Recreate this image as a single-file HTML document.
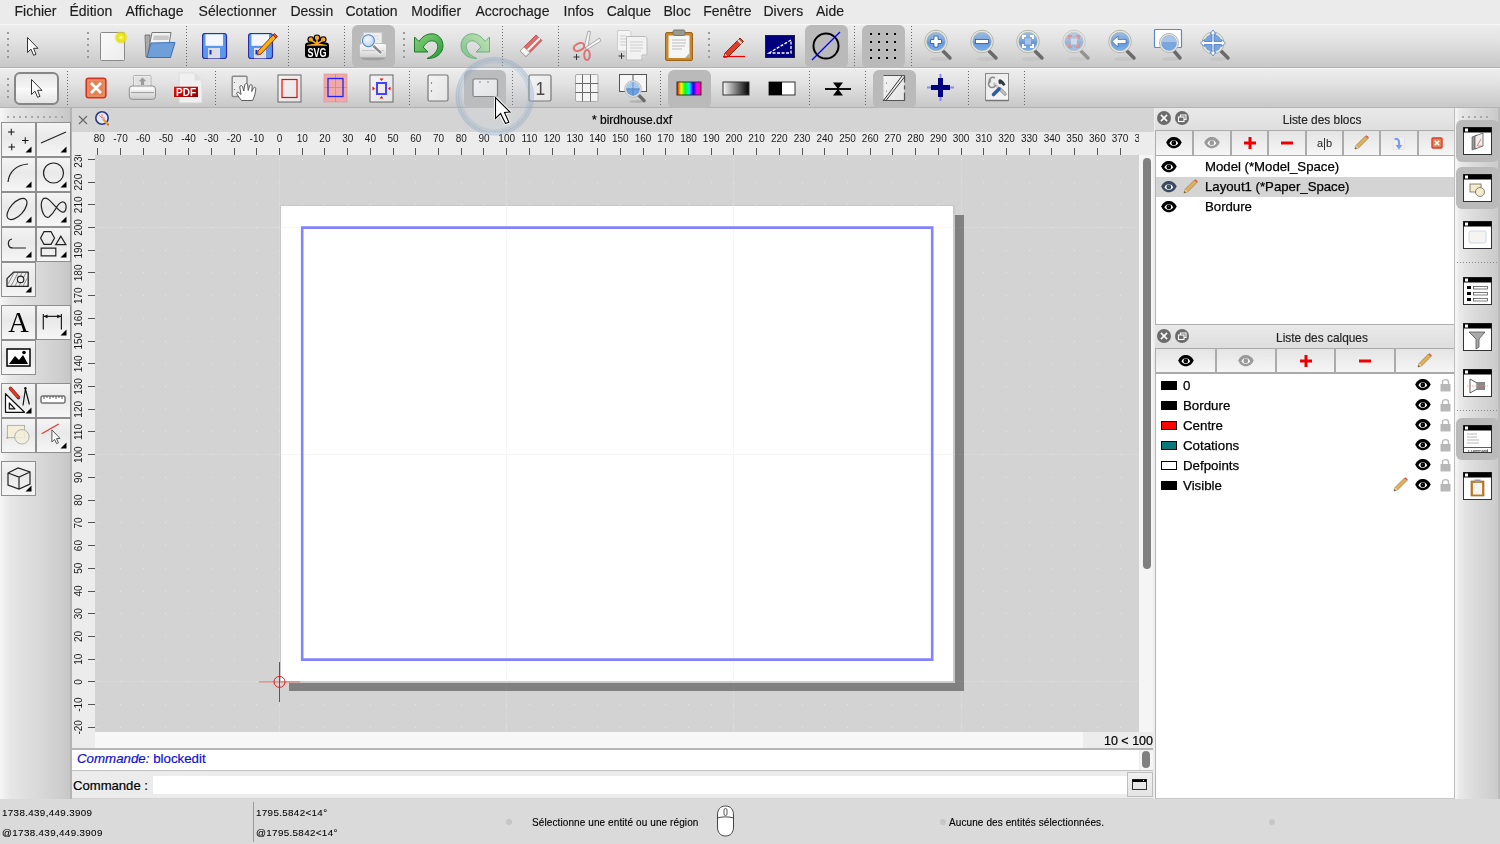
<!DOCTYPE html><html><head><meta charset="utf-8"><title>birdhouse.dxf</title><style>
*{box-sizing:border-box}
html,body{margin:0;padding:0;width:1500px;height:844px;overflow:hidden;background:#ececec;
 font-family:"Liberation Sans",sans-serif;color:#1e1e1e}
.a{position:absolute}
#menubar{left:0;top:0;width:1500px;height:24px;background:#ebebeb}
#menubar span{position:absolute;top:3px;font-size:14px;color:#1c1c1c;white-space:nowrap;-webkit-text-stroke:.15px #1c1c1c}
.tb{left:0;width:1500px;background:linear-gradient(#ededed,#e3e3e3 35%,#c8c8c8)}
#tb1{top:24px;height:44px;border-top:1px solid #f7f7f7;border-bottom:1px solid #b2b2b2}
#tb2{top:68px;height:40px;border-top:1px solid #f7f7f7;border-bottom:1px solid #b2b2b2}
.hl{position:absolute;background:#bababa;border-radius:6px}
.vsep{position:absolute;width:1px;background:repeating-linear-gradient(#6a6a6a 0 1px,transparent 1px 3px)}
.hdl{position:absolute;width:2px;background:repeating-linear-gradient(#9a9a9a 0 2px,transparent 2px 6px)}
#leftdock{left:0;top:108px;width:71px;height:691px;background:linear-gradient(90deg,#f6f6f6 0,#e6e6e6 15%,#dadada 50%,#cecece 85%,#c6c6c6)}
#ldiv{left:70px;top:108px;width:2px;height:691px;background:#b4b4b4}
.tbtn{position:absolute;width:35px;height:35px;border:1px solid #8f8f8f;background:linear-gradient(#f4f4f4,#e9e9e9 45%,#f6f6f6)}
.tbtn .tri{position:absolute;right:3px;bottom:3px;width:0;height:0;border-left:7px solid transparent;border-bottom:7px solid #000}
#tabbar{left:72px;top:108px;width:1082px;height:24px;background:#d4d4d4}
#hruler{left:72px;top:132px;width:1081px;height:23px;background:#ececec;overflow:hidden}
#vruler{left:72px;top:155px;width:23px;height:592px;background:#ececec;overflow:hidden}
#draw{left:95px;top:155px;width:1044px;height:577px;background:#d3d3d3;overflow:hidden}
#vscroll{left:1139px;top:155px;width:14px;height:577px;background:#f5f5f5}
#hscroll{left:95px;top:732px;width:988px;height:16px;background:#f7f7f7}
#zoomlbl{left:1083px;top:732px;width:70px;height:16px;background:#ececec;font-size:12.5px;text-align:right;padding-right:0px;line-height:18.5px;color:#000;-webkit-text-stroke:.2px #000}
#cmdhist{left:72px;top:748px;width:1081px;height:23px;background:#fff;border-top:2px solid #b9b9b9;border-bottom:1px solid #c4c4c4}
#cmdrow{left:72px;top:771px;width:1081px;height:27px;background:#ececec;border-bottom:1px solid #c8c8c8}
#status{left:0;top:799px;width:1500px;height:45px;background:#dadada}
#rdock{left:1155px;top:108px;width:300px;height:690px;background:#ececec}
#rtb{left:1454px;top:108px;width:46px;height:691px;background:linear-gradient(90deg,#f4f4f4 0,#f4f4f4 2px,#eaeaea 4px,#dcdcdc 40%,#cbcbcb 95%,#bcbcbc 96%,#bcbcbc);border-left:1px solid #bdbdbd}
</style></head><body>
<div id="menubar" class="a"><span style="left:14.5px">Fichier</span><span style="left:69.5px">Édition</span><span style="left:125.5px">Affichage</span><span style="left:198.6px">Sélectionner</span><span style="left:290.4px">Dessin</span><span style="left:345.5px">Cotation</span><span style="left:411.3px">Modifier</span><span style="left:475.5px">Accrochage</span><span style="left:563.5px">Infos</span><span style="left:606.7px">Calque</span><span style="left:663.5px">Bloc</span><span style="left:703.2px">Fenêtre</span><span style="left:763.5px">Divers</span><span style="left:816px">Aide</span></div>
<div id="tb1" class="a tb"></div>
<div id="tb2" class="a tb"></div>
<div class="hdl" style="left:7px;top:32px;height:26px"></div>
<svg class="a" style="left:26px;top:36px" width="14" height="22" viewBox="0 0 14 22"><path d="M0.5 0.5 L0.5 15.5 L4 12.2 L6.6 18.3 L9 17.3 L6.5 11.3 L11 11.3 Z" fill="#fff" stroke="#333" stroke-width="1" stroke-linejoin="round" transform="translate(1,1)"/></svg>
<div class="hdl" style="left:87px;top:32px;height:26px"></div>
<svg class="a" style="left:99px;top:30px" width="30" height="32" viewBox="0 0 30 32"><defs><radialGradient id="glow"><stop offset="0" stop-color="#fff"/><stop offset=".25" stop-color="#f3ee30"/><stop offset=".6" stop-color="#e8e010"/><stop offset="1" stop-color="#e8e010" stop-opacity="0"/></radialGradient>
<linearGradient id="pg" x1="0" y1="0" x2="1" y2="1"><stop offset="0" stop-color="#fafafa"/><stop offset="1" stop-color="#ececec"/></linearGradient></defs>
<rect x="1.5" y="2.5" width="24" height="28" rx="1" fill="url(#pg)" stroke="#8a8a8a"/>
<circle cx="22" cy="7.5" r="7" fill="url(#glow)"/></svg>
<svg class="a" style="left:142px;top:31px" width="34" height="28" viewBox="0 0 34 28"><path d="M3 4 L8 4 L8 26 L4 26 Z" fill="#aaa" stroke="#777"/>
<path d="M10 1.5 L29 1.5 L26 20 L6 22 Z" fill="#f2f2f2" stroke="#777"/>
<path d="M12 4.5 L27 4.5 L26.5 9 L11 9 Z" fill="#c8c8c8"/>
<path d="M9 12 L33 11.5 L28.5 26.5 L5 26.5 Z" fill="#6f9fd8" stroke="#3d6fb8"/></svg>
<div class="vsep" style="left:186px;top:26px;height:41px"></div>
<svg class="a" style="left:202px;top:33px" width="26" height="27" viewBox="0 0 26 27"><rect x="0.5" y="0.5" width="24" height="25" rx="2.5" fill="#5a98ee" stroke="#2d2d9e" stroke-width="1.2"/>
<rect x="3.5" y="1.3" width="17.5" height="11.5" fill="#f4f6fc"/>
<rect x="6" y="15" width="12" height="10.3" fill="#dcdce4"/>
<rect x="7.5" y="17" width="2" height="4.5" fill="#1030d0"/></svg>
<svg class="a" style="left:248px;top:30px" width="30" height="30" viewBox="0 0 30 30"><g transform="translate(0,3)"><rect x="0.5" y="0.5" width="24" height="25" rx="2.5" fill="#5a98ee" stroke="#2d2d9e" stroke-width="1.2"/>
<rect x="3.5" y="1.3" width="17.5" height="11.5" fill="#f4f6fc"/>
<rect x="6" y="15" width="12" height="10.3" fill="#dcdce4"/>
<rect x="7.5" y="17" width="2" height="4.5" fill="#1030d0"/></g>
<path d="M10 21 L25 5 L28 8 L13 24 L9.5 25 Z" fill="#f7b500" stroke="#a33010" stroke-width="1"/>
<path d="M25 5 L26.5 3.5 L29.5 6.5 L28 8 Z" fill="#e05030" stroke="#a33010" stroke-width="1"/></svg>
<div class="vsep" style="left:288px;top:26px;height:41px"></div>
<svg class="a" style="left:304px;top:33px" width="26" height="26" viewBox="0 0 26 26"><g stroke="#000" stroke-width="4.2" stroke-linecap="round" fill="none"><path d="M13 11 L13 5 M13 11 L7 6.8 M13 11 L19.2 6.8"/></g>
<circle cx="13" cy="5" r="3.4" fill="#000"/><circle cx="6.8" cy="6.6" r="3.4" fill="#000"/><circle cx="19.2" cy="6.6" r="3.4" fill="#000"/>
<rect x="1" y="9.5" width="24" height="15.5" rx="3.2" fill="#000"/>
<g stroke="#f5a831" stroke-width="1.6" stroke-linecap="round" fill="none"><path d="M13 11 L13 5 M13 11 L7 6.8 M13 11 L19.2 6.8"/></g>
<circle cx="13" cy="4.8" r="2.2" fill="#f5a831"/><circle cx="6.8" cy="6.4" r="2.2" fill="#f5a831"/><circle cx="19.2" cy="6.4" r="2.2" fill="#f5a831"/>
<path d="M3 12 Q13 9.5 23 12 L23 12.8 L3 12.8 Z" fill="#f5a831"/>
<text x="13" y="23.6" text-anchor="middle" font-family="Liberation Sans" font-weight="bold" font-size="12.5" fill="#fff" textLength="19" lengthAdjust="spacingAndGlyphs">SVG</text></svg>
<div class="vsep" style="left:344px;top:26px;height:41px"></div>
<div class="hl" style="left:352px;top:25px;width:43px;height:43px"></div>
<svg class="a" style="left:358px;top:31px" width="30" height="30" viewBox="0 0 30 30"><defs><linearGradient id="pr" x1="0" y1="0" x2="0" y2="1"><stop offset="0" stop-color="#fafafa"/><stop offset=".6" stop-color="#e4e4e4"/><stop offset="1" stop-color="#cfcfcf"/></linearGradient>
<radialGradient id="lens" cx=".4" cy=".35" r=".7"><stop offset="0" stop-color="#f2f6fc"/><stop offset=".6" stop-color="#d4e2f2"/><stop offset="1" stop-color="#b8cce4"/></radialGradient></defs>
<ellipse cx="15" cy="27.5" rx="12" ry="1.8" fill="#888" opacity=".55"/>
<rect x="5.5" y="1.5" width="18.5" height="13" fill="#eeeeee" stroke="#c8c8c8" stroke-width=".8"/>
<path d="M8 5 h13 M8 8 h13" stroke="#d8d8d8" stroke-width="1"/>
<path d="M1.3 15 Q1.3 12.5 4 12.5 L26 12.5 Q28.6 12.5 28.6 15 L28.6 26.5 L1.3 26.5 Z" fill="url(#pr)" stroke="#b0b0b0" stroke-width=".8"/>
<path d="M4 19.5 h22" stroke="#c4c4c4" stroke-width="1"/>
<line x1="15.5" y1="15" x2="22.5" y2="21.5" stroke="#fff" stroke-width="4" stroke-linecap="round"/>
<line x1="15.5" y1="15" x2="22.5" y2="21.5" stroke="#8a8a8a" stroke-width="2.4" stroke-linecap="round"/>
<circle cx="10.4" cy="9.7" r="7.3" fill="#f4f4f4"/>
<circle cx="10.4" cy="9.7" r="6" fill="url(#lens)" stroke="#4a84cc" stroke-width="1.1"/></svg>
<div class="hdl" style="left:403px;top:32px;height:26px"></div>
<svg class="a" style="left:413px;top:33px" width="31" height="27" viewBox="0 0 31 27"><defs><linearGradient id="ugu" x1="0" y1="0" x2="1" y2="1"><stop offset="0" stop-color="#8ad27a"/><stop offset="1" stop-color="#2a9a3a"/></linearGradient></defs>
<path d="M1.5 4 L1.5 19 L15 19 L10.2 14.2 C13 9.8 16 7.8 19 7.8 C22.5 7.8 24.8 10.2 24.8 13.5 C24.8 18 20.5 22.8 14 25.5 C23 25.8 30 20.5 30 12.8 C30 5.8 25 0.8 19 0.8 C13.5 0.8 9 3.8 6 8.5 Z" fill="url(#ugu)" stroke="#1a7a2a" stroke-width="1" stroke-linejoin="round"/></svg>
<svg class="a" style="left:460px;top:33px" width="31" height="27" viewBox="0 0 31 27"><g transform="translate(31,0) scale(-1,1)"><defs><linearGradient id="ugr" x1="0" y1="0" x2="1" y2="1"><stop offset="0" stop-color="#c4e4b4"/><stop offset="1" stop-color="#80c090"/></linearGradient></defs>
<path d="M1.5 4 L1.5 19 L15 19 L10.2 14.2 C13 9.8 16 7.8 19 7.8 C22.5 7.8 24.8 10.2 24.8 13.5 C24.8 18 20.5 22.8 14 25.5 C23 25.8 30 20.5 30 12.8 C30 5.8 25 0.8 19 0.8 C13.5 0.8 9 3.8 6 8.5 Z" fill="url(#ugr)" stroke="#70b080" stroke-width="1" stroke-linejoin="round"/></g></svg>
<div class="vsep" style="left:502px;top:26px;height:41px"></div>
<svg class="a" style="left:517px;top:32px" width="28" height="28" viewBox="0 0 28 28"><ellipse cx="14" cy="24.5" rx="11" ry="1.6" fill="#d0d0d0" opacity=".7"/>
<path d="M3 19 L19 3 L25 8.5 L9 24.5 Z" fill="#e06868" stroke="#b04848" stroke-width="0.8"/>
<path d="M6 21.5 L22 5.5 L23.5 7 L7.5 23 Z" fill="#f4f4f4"/>
<path d="M3 19 L7 15 L13 20.5 L9 24.5 Z" fill="#f6f6f6" stroke="#999" stroke-width="0.8"/></svg>
<div class="vsep" style="left:558px;top:26px;height:41px"></div>
<svg class="a" style="left:572px;top:30px" width="30" height="32" viewBox="0 0 30 32"><path d="M12 18 L16 1 L18.5 1.5 L16 17 Z" fill="#f4f4f4" stroke="#999" stroke-width="0.8"/>
<path d="M13 18 L27.5 8 L29 11 L15 19.5 Z" fill="#f4f4f4" stroke="#999" stroke-width="0.8"/>
<ellipse cx="7" cy="17" rx="5.5" ry="3.5" transform="rotate(-25 7 17)" fill="none" stroke="#e07070" stroke-width="2"/>
<ellipse cx="15" cy="25" rx="2.8" ry="5" fill="none" stroke="#e07070" stroke-width="2"/>
<path d="M1.5 27 h6 M4.5 24 v6" stroke="#333" stroke-width="1"/></svg>
<svg class="a" style="left:617px;top:30px" width="32" height="32" viewBox="0 0 32 32"><path d="M0.5 0.5 h12 l1.5 1.5 v19 h-13.5z" fill="#f4f4f4" stroke="#ccc"/>
<path d="M9.5 6.5 h19 l1.5 1.5 v17 l-5 5 h-15.5 z" fill="#f2f2f2" stroke="#bbb"/>
<path d="M25 30 l0-5 l5 0" fill="#ddd" stroke="#bbb"/>
<path d="M13 12 h13 M13 15 h13 M13 18 h13 M13 21 h11 M3 6 h6 M3 9 h6 M3 12 h6 M3 15 h6" stroke="#ccc" stroke-width="1"/>
<path d="M1.5 26 h6 M4.5 23 v6" stroke="#333" stroke-width="1"/></svg>
<svg class="a" style="left:664px;top:29px" width="30" height="33" viewBox="0 0 30 33"><rect x="1.5" y="3.5" width="27" height="28" rx="1.5" fill="#c8862a" stroke="#9a6418"/>
<rect x="4.5" y="6.5" width="21" height="22.5" fill="#f6f6f6"/>
<path d="M25.5 24 l-4.5 5 h4.5z" fill="#aaa"/>
<rect x="9" y="1" width="12" height="5.5" rx="1.5" fill="#9a9a8a" stroke="#777"/>
<path d="M8 11 h14 M8 14 h14 M8 17 h13 M8 20 h10" stroke="#bbb" stroke-width="1"/></svg>
<div class="hdl" style="left:708px;top:32px;height:26px"></div>
<svg class="a" style="left:722px;top:34px" width="24" height="24" viewBox="0 0 24 24"><path d="M3 19 L18 4 L21.5 7.5 L6.5 22.5 L2 23.5 Z" fill="#e23b2a" stroke="#7a3010" stroke-width="1"/>
<path d="M16 6 L19.5 9.5" stroke="#ddd" stroke-width="2"/>
<path d="M2 23.5 L3 19 L6.5 22.5 Z" fill="#f0c090" stroke="#7a3010" stroke-width="0.6"/>
<line x1="1" y1="22.5" x2="23" y2="22.5" stroke="#e00" stroke-width="1.2"/></svg>
<svg class="a" style="left:765px;top:35px" width="30" height="23" viewBox="0 0 30 23"><rect x="0.5" y="0.5" width="29" height="22" fill="#00007f" stroke="#222"/>
<path d="M4 18 L26 5 L26 18 Z" fill="none" stroke="#fff" stroke-width="1.3" stroke-dasharray="3 1.5"/></svg>
<div class="hl" style="left:805px;top:25px;width:43px;height:43px"></div>
<svg class="a" style="left:805px;top:25px" width="43" height="43" viewBox="0 0 43 43"><circle cx="21" cy="21" r="12.5" fill="none" stroke="#000" stroke-width="2"/>
<line x1="7" y1="35" x2="35" y2="7" stroke="#00f" stroke-width="1.2"/></svg>
<div class="vsep" style="left:854px;top:26px;height:41px"></div>
<div class="hl" style="left:862px;top:25px;width:43px;height:43px"></div>
<svg class="a" style="left:862px;top:25px" width="43" height="43" viewBox="0 0 43 43"><rect x="8" y="8" width="2" height="2" fill="#000"/><rect x="8" y="16" width="2" height="2" fill="#000"/><rect x="8" y="24" width="2" height="2" fill="#000"/><rect x="8" y="32" width="2" height="2" fill="#000"/><rect x="16" y="8" width="2" height="2" fill="#000"/><rect x="16" y="16" width="2" height="2" fill="#000"/><rect x="16" y="24" width="2" height="2" fill="#000"/><rect x="16" y="32" width="2" height="2" fill="#000"/><rect x="24" y="8" width="2" height="2" fill="#000"/><rect x="24" y="16" width="2" height="2" fill="#000"/><rect x="24" y="24" width="2" height="2" fill="#000"/><rect x="24" y="32" width="2" height="2" fill="#000"/><rect x="32" y="8" width="2" height="2" fill="#000"/><rect x="32" y="16" width="2" height="2" fill="#000"/><rect x="32" y="24" width="2" height="2" fill="#000"/><rect x="32" y="32" width="2" height="2" fill="#000"/></svg>
<div class="vsep" style="left:911px;top:26px;height:41px"></div>
<svg class="a" style="left:923px;top:28px" width="32" height="34" viewBox="0 0 32 34"><g opacity="1"><defs><linearGradient id="zb936" x1="0" y1="0" x2="0" y2="1"><stop offset="0" stop-color="#9dbbe4"/><stop offset=".45" stop-color="#7aa6dd"/><stop offset=".55" stop-color="#6698d8"/><stop offset="1" stop-color="#79b0ec"/></linearGradient></defs>
<ellipse cx="17" cy="31" rx="10" ry="2" fill="#bbb" opacity=".5"/>
<line x1="20" y1="23" x2="27" y2="30" stroke="#6a6a6a" stroke-width="3.5" stroke-linecap="round"/>
<circle cx="13" cy="13.5" r="11.3" fill="#e9e9e0" stroke="#b5b5ad" stroke-width="1"/>
<circle cx="13" cy="13.5" r="9.3" fill="url(#zb936)" stroke="#9aa" stroke-width=".5"/><path d="M11 8 h4 v3.5 h3.5 v4 h-3.5 v3.5 h-4 v-3.5 h-3.5 v-4 h3.5z" fill="#fff" stroke="#2a58a0" stroke-width=".8"/></g></svg>
<svg class="a" style="left:969px;top:28px" width="32" height="34" viewBox="0 0 32 34"><g opacity="1"><defs><linearGradient id="zb982" x1="0" y1="0" x2="0" y2="1"><stop offset="0" stop-color="#9dbbe4"/><stop offset=".45" stop-color="#7aa6dd"/><stop offset=".55" stop-color="#6698d8"/><stop offset="1" stop-color="#79b0ec"/></linearGradient></defs>
<ellipse cx="17" cy="31" rx="10" ry="2" fill="#bbb" opacity=".5"/>
<line x1="20" y1="23" x2="27" y2="30" stroke="#6a6a6a" stroke-width="3.5" stroke-linecap="round"/>
<circle cx="13" cy="13.5" r="11.3" fill="#e9e9e0" stroke="#b5b5ad" stroke-width="1"/>
<circle cx="13" cy="13.5" r="9.3" fill="url(#zb982)" stroke="#9aa" stroke-width=".5"/><rect x="6.5" y="11.5" width="13" height="4" fill="#fff" stroke="#2a58a0" stroke-width=".8"/></g></svg>
<svg class="a" style="left:1015px;top:28px" width="32" height="34" viewBox="0 0 32 34"><g opacity="1"><defs><linearGradient id="zb1028" x1="0" y1="0" x2="0" y2="1"><stop offset="0" stop-color="#9dbbe4"/><stop offset=".45" stop-color="#7aa6dd"/><stop offset=".55" stop-color="#6698d8"/><stop offset="1" stop-color="#79b0ec"/></linearGradient></defs>
<ellipse cx="17" cy="31" rx="10" ry="2" fill="#bbb" opacity=".5"/>
<line x1="20" y1="23" x2="27" y2="30" stroke="#6a6a6a" stroke-width="3.5" stroke-linecap="round"/>
<circle cx="13" cy="13.5" r="11.3" fill="#e9e9e0" stroke="#b5b5ad" stroke-width="1"/>
<circle cx="13" cy="13.5" r="9.3" fill="url(#zb1028)" stroke="#9aa" stroke-width=".5"/><path d="M8 11 v-3 h3 M15 8 h3 v3 M18 16 v3 h-3 M11 19 h-3 v-3" fill="none" stroke="#fff" stroke-width="2"/><rect x="10" y="10.5" width="6" height="6" fill="#a8c4ea"/></g></svg>
<svg class="a" style="left:1061px;top:28px" width="32" height="34" viewBox="0 0 32 34"><g opacity=".6"><defs><linearGradient id="zb1074" x1="0" y1="0" x2="0" y2="1"><stop offset="0" stop-color="#9dbbe4"/><stop offset=".45" stop-color="#7aa6dd"/><stop offset=".55" stop-color="#6698d8"/><stop offset="1" stop-color="#79b0ec"/></linearGradient></defs>
<ellipse cx="17" cy="31" rx="10" ry="2" fill="#bbb" opacity=".5"/>
<line x1="20" y1="23" x2="27" y2="30" stroke="#6a6a6a" stroke-width="3.5" stroke-linecap="round"/>
<circle cx="13" cy="13.5" r="11.3" fill="#e9e9e0" stroke="#b5b5ad" stroke-width="1"/>
<circle cx="13" cy="13.5" r="9.3" fill="url(#zb1074)" stroke="#9aa" stroke-width=".5"/><path d="M8 11 v-3 h3 M15 8 h3 v3 M18 16 v3 h-3 M11 19 h-3 v-3" fill="none" stroke="#e06060" stroke-width="2"/><rect x="10" y="10.5" width="6" height="6" fill="#c8d4e4"/></g></svg>
<svg class="a" style="left:1107px;top:28px" width="32" height="34" viewBox="0 0 32 34"><g opacity="1"><defs><linearGradient id="zb1120" x1="0" y1="0" x2="0" y2="1"><stop offset="0" stop-color="#9dbbe4"/><stop offset=".45" stop-color="#7aa6dd"/><stop offset=".55" stop-color="#6698d8"/><stop offset="1" stop-color="#79b0ec"/></linearGradient></defs>
<ellipse cx="17" cy="31" rx="10" ry="2" fill="#bbb" opacity=".5"/>
<line x1="20" y1="23" x2="27" y2="30" stroke="#6a6a6a" stroke-width="3.5" stroke-linecap="round"/>
<circle cx="13" cy="13.5" r="11.3" fill="#e9e9e0" stroke="#b5b5ad" stroke-width="1"/>
<circle cx="13" cy="13.5" r="9.3" fill="url(#zb1120)" stroke="#9aa" stroke-width=".5"/><path d="M5 13.5 L11 8 v3.5 h8 v4 h-8 v3.5 z" fill="#fff" stroke="#2a58a0" stroke-width=".6"/></g></svg>
<svg class="a" style="left:1152px;top:28px" width="34" height="34" viewBox="0 0 34 34"><rect x="2.5" y="1.5" width="27" height="18" rx="1" fill="#fff" stroke="#5b88c8" stroke-width="1.2"/>
<ellipse cx="19" cy="31" rx="9" ry="2" fill="#bbb" opacity=".5"/>
<line x1="22" y1="23" x2="28" y2="30" stroke="#6a6a6a" stroke-width="3.5" stroke-linecap="round"/>
<circle cx="17" cy="15" r="9.5" fill="#e9e9e0" stroke="#b5b5ad"/>
<circle cx="17" cy="15" r="7.8" fill="#7aa6dd"/><path d="M9.3 14 A7.8 7.8 0 0 1 24.7 14 Z" fill="#a8c4ea"/></svg>
<svg class="a" style="left:1199px;top:28px" width="34" height="34" viewBox="0 0 34 34"><ellipse cx="19" cy="31" rx="9" ry="2" fill="#bbb" opacity=".5"/>
<line x1="22" y1="23" x2="29" y2="30" stroke="#6a6a6a" stroke-width="3.5" stroke-linecap="round"/>
<circle cx="14" cy="15" r="11" fill="#e9e9e0" stroke="#b5b5ad"/>
<circle cx="14" cy="15" r="9" fill="#79a5dc"/>
<path d="M14 2 l3 4 h-2 v7.5 h7.5 v-2 l4 3.5 l-4 3.5 v-2 h-7.5 v7.5 h2 l-3 4 l-3-4 h2 v-7.5 h-7.5 v2 l-4-3.5 l4-3.5 v2 h7.5 v-7.5 h-2 z" fill="#fff" stroke="#4a7cc4" stroke-width=".8"/></svg>
<div class="hdl" style="left:7px;top:78px;height:20px"></div>
<div class="a" style="left:14px;top:72px;width:45px;height:33px;border:2px solid #868686;border-radius:6px;background:linear-gradient(#e8e8e8,#f4f4f4 45%,#fbfbfb 50%,#e4e4e4)"></div>
<svg class="a" style="left:30px;top:78px" width="14" height="22" viewBox="0 0 14 22"><path d="M0.5 0.5 L0.5 15.5 L4 12.2 L6.6 18.3 L9 17.3 L6.5 11.3 L11 11.3 Z" fill="#fff" stroke="#333" stroke-width="1" stroke-linejoin="round" transform="translate(1,1)"/></svg>
<div class="vsep" style="left:67px;top:71px;height:35px"></div>
<svg class="a" style="left:85px;top:77px" width="22" height="22" viewBox="0 0 22 22"><rect x="1.2" y="1.2" width="19.6" height="19.6" rx="2.5" fill="#e2845a" stroke="#dc3020" stroke-width="1.6"/>
<rect x="3" y="3" width="16" height="16" fill="none" stroke="#ea9a70" stroke-width=".8"/>
<path d="M6 6 L16 16 M16 6 L6 16" stroke="#fff" stroke-width="2.6"/></svg>
<svg class="a" style="left:128px;top:74px" width="30" height="28" viewBox="0 0 30 28"><defs><linearGradient id="pp" x1="0" y1="0" x2="0" y2="1"><stop offset="0" stop-color="#fafafa"/><stop offset=".5" stop-color="#e6e6e6"/><stop offset="1" stop-color="#c8c8c8"/></linearGradient></defs>
<rect x="5.5" y="1.5" width="17.5" height="11.5" rx="1" fill="#ececec" stroke="#b4b4b4"/>
<rect x="7" y="3" width="14.5" height="8" fill="#e2e2e2"/>
<path d="M14.5 3.5 l-3.8 3.8 h2.2 v3.7 h3.2 v-3.7 h2.2z" fill="#9c9c9c"/>
<rect x="1.3" y="12" width="26.2" height="13.4" rx="3" fill="url(#pp)" stroke="#8e8e8e" stroke-width="1"/>
<path d="M3 18.6 h23" stroke="#9a9a9a" stroke-width="1"/><path d="M3.5 15 h22" stroke="#fff" stroke-width="1"/></svg>
<svg class="a" style="left:173px;top:72px" width="30" height="32" viewBox="0 0 30 32"><defs><linearGradient id="pdfl" x1="0" y1="0" x2="1" y2="1"><stop offset="0" stop-color="#f01010"/><stop offset="1" stop-color="#8a0000"/></linearGradient></defs>
<path d="M6.2 1 h15.5 l7.1 7.5 v22.3 h-22.6 z" fill="#f0f0f0" stroke="#dcdcdc" stroke-width=".8"/>
<path d="M21.7 1 v7.5 h7.1" fill="#e0e0e0"/>
<rect x="1" y="14.7" width="24" height="10.3" fill="url(#pdfl)"/>
<text x="13" y="23.8" text-anchor="middle" font-family="Liberation Sans" font-weight="bold" font-size="11" fill="#fff" textLength="20" lengthAdjust="spacingAndGlyphs">PDF</text></svg>
<div class="vsep" style="left:215px;top:71px;height:35px"></div>
<svg class="a" style="left:230px;top:73px" width="28" height="30" viewBox="0 0 28 30"><rect x="2.2" y="3.2" width="14.8" height="20.3" rx="1" fill="#ececec" stroke="#8a8a8a" stroke-width="1.5"/>
<circle cx="4.5" cy="9.5" r=".6" fill="#666"/><circle cx="4.5" cy="16.5" r=".6" fill="#666"/>
<path d="M11.5 27.5 C9.5 25 8 23 6.8 21 C6.2 19.8 7.5 18.6 8.8 19.5 L11 21.5 L9.8 14 C9.6 12.5 12 12 12.5 13.6 L13.8 18 L14.8 11.8 C15 10.2 17.5 10.2 17.7 11.8 L18.2 17.5 L19.6 12.6 C20 11.2 22.2 11.4 22.2 13 L21.8 18.5 L23.4 15 C24 13.8 26 14.2 25.8 15.8 C25.5 19.5 24.5 24 22.5 27.5 Z" fill="#fff" stroke="#5a5a5a" stroke-width="1" stroke-linejoin="round"/></svg>
<svg class="a" style="left:277px;top:74px" width="26" height="29" viewBox="0 0 26 29"><defs><linearGradient id="pgb" x1="0" y1="0" x2="1" y2="1"><stop offset="0" stop-color="#f4f4f4"/><stop offset="1" stop-color="#e4e4e4"/></linearGradient></defs><rect x="1" y="1" width="23" height="27" fill="url(#pgb)" stroke="#666"/>
<rect x="5" y="5.5" width="15" height="18" fill="none" stroke="#f00" stroke-width="1.2"/></svg>
<svg class="a" style="left:323px;top:73px" width="26" height="30" viewBox="0 0 26 30"><rect x="1" y="1" width="23" height="28" fill="#f0a8a8" stroke="#d89090" stroke-width=".6"/>
<path d="M12.5 1 v28 M1 14.5 h23" stroke="#d08888" stroke-width=".8"/>
<rect x="5" y="5.5" width="15" height="18" fill="none" stroke="#22e" stroke-width="1.3"/></svg>
<svg class="a" style="left:369px;top:74px" width="26" height="29" viewBox="0 0 26 29"><defs><linearGradient id="pgb" x1="0" y1="0" x2="1" y2="1"><stop offset="0" stop-color="#f4f4f4"/><stop offset="1" stop-color="#e4e4e4"/></linearGradient></defs><rect x="1" y="1" width="23" height="27" fill="url(#pgb)" stroke="#666"/>
<rect x="8" y="9" width="9" height="11" fill="none" stroke="#44f" stroke-width="2"/>
<path d="M12.5 7 l-2-2.5 h4z M12.5 22 l-2 2.5 h4z M6 14.5 l-2.5-2 v4z M19 14.5 l2.5-2 v4z" fill="#f00"/></svg>
<div class="vsep" style="left:409px;top:71px;height:35px"></div>
<svg class="a" style="left:427px;top:74px" width="22" height="28" viewBox="0 0 22 28"><defs><linearGradient id="pgb" x1="0" y1="0" x2="1" y2="1"><stop offset="0" stop-color="#f4f4f4"/><stop offset="1" stop-color="#e4e4e4"/></linearGradient></defs><rect x="1" y="1" width="20" height="26" rx="1.5" fill="url(#pgb)" stroke="#777" stroke-width="1.2"/>
<circle cx="4.5" cy="9" r=".7" fill="#555"/><circle cx="4.5" cy="17" r=".7" fill="#555"/></svg>
<div class="hl" style="left:464px;top:70px;width:42px;height:38px"></div>
<svg class="a" style="left:472px;top:78px" width="27" height="20" viewBox="0 0 27 20"><defs><linearGradient id="pgb" x1="0" y1="0" x2="1" y2="1"><stop offset="0" stop-color="#f4f4f4"/><stop offset="1" stop-color="#e4e4e4"/></linearGradient></defs><rect x="1" y="1" width="24.5" height="17.5" rx="1.5" fill="url(#pgb)" stroke="#777" stroke-width="1.2"/>
<circle cx="8" cy="4" r=".7" fill="#555"/><circle cx="16" cy="4" r=".7" fill="#555"/></svg>
<div class="vsep" style="left:512px;top:71px;height:35px"></div>
<svg class="a" style="left:528px;top:74px" width="24" height="28" viewBox="0 0 24 28"><defs><linearGradient id="pgb" x1="0" y1="0" x2="1" y2="1"><stop offset="0" stop-color="#f4f4f4"/><stop offset="1" stop-color="#e4e4e4"/></linearGradient></defs><rect x="1" y="1" width="22" height="26" rx="1.5" fill="url(#pgb)" stroke="#777" stroke-width="1.2"/>
<text x="12.3" y="21.3" text-anchor="middle" font-family="Liberation Sans" font-size="17.5" fill="#484848">1</text></svg>
<svg class="a" style="left:574px;top:73px" width="25" height="30" viewBox="0 0 25 30"><rect x="1.5" y="1.5" width="22.5" height="27" rx="1.5" fill="#f4f4f4" stroke="#aaa"/>
<path d="M8.5 1.5 v27 M16.5 1.5 v27 M1.5 10.5 h22.5 M1.5 19.5 h22.5" stroke="#6a6a6a" stroke-width="1"/></svg>
<svg class="a" style="left:618px;top:73px" width="32" height="31" viewBox="0 0 32 31"><rect x="1.5" y="1.5" width="27" height="17" fill="#f6f6f6" stroke="#555"/>
<path d="M15 1.5 v17" stroke="#555"/>
<ellipse cx="20" cy="28.5" rx="9" ry="1.5" fill="#999" opacity=".5"/>
<line x1="19.5" y1="21" x2="26" y2="27.5" stroke="#6a6a6a" stroke-width="3.2" stroke-linecap="round"/>
<circle cx="15" cy="16" r="8.3" fill="#e8e8e0" stroke="#bbb"/>
<circle cx="15" cy="16" r="6.8" fill="#6ea0dc"/><path d="M8.2 15.5 A6.8 6.8 0 0 1 21.8 15.5 Z" fill="#a8c8ee"/><path d="M15 9.2 v13.6 M8.2 16 h13.6" stroke="#4a7cc4" stroke-width=".7"/></svg>
<div class="vsep" style="left:660px;top:71px;height:35px"></div>
<div class="hl" style="left:668px;top:70px;width:43px;height:38px"></div>
<svg class="a" style="left:676px;top:81px" width="26" height="15" viewBox="0 0 26 15"><defs><linearGradient id="rb"><stop offset="0" stop-color="#e00"/><stop offset=".17" stop-color="#ff0"/><stop offset=".33" stop-color="#0f0"/><stop offset=".5" stop-color="#0ff"/><stop offset=".67" stop-color="#00f"/><stop offset=".83" stop-color="#f0f"/><stop offset="1" stop-color="#f06"/></linearGradient></defs>
<rect x="1" y="1" width="24" height="13" fill="url(#rb)" stroke="#333"/></svg>
<svg class="a" style="left:722px;top:81px" width="28" height="15" viewBox="0 0 28 15"><defs><linearGradient id="gr"><stop offset="0" stop-color="#f8f8f8"/><stop offset="1" stop-color="#000"/></linearGradient></defs>
<rect x="1" y="1" width="26" height="13" fill="url(#gr)" stroke="#333"/></svg>
<svg class="a" style="left:768px;top:81px" width="28" height="15" viewBox="0 0 28 15"><rect x="1" y="1" width="26" height="13" fill="#fff" stroke="#333"/><rect x="1" y="1" width="13" height="13" fill="#000"/></svg>
<div class="vsep" style="left:809px;top:71px;height:35px"></div>
<svg class="a" style="left:824px;top:81px" width="28" height="16" viewBox="0 0 28 16"><line x1="1" y1="8" x2="27" y2="8" stroke="#111" stroke-width="2"/>
<path d="M9 1.5 h10 l-5 6.5z M9 14.5 h10 l-5 -6.5z" fill="#000"/></svg>
<div class="vsep" style="left:865px;top:71px;height:35px"></div>
<div class="hl" style="left:873px;top:70px;width:43px;height:38px"></div>
<svg class="a" style="left:882px;top:74px" width="24" height="28" viewBox="0 0 24 28"><defs><linearGradient id="pgb" x1="0" y1="0" x2="1" y2="1"><stop offset="0" stop-color="#f4f4f4"/><stop offset="1" stop-color="#e4e4e4"/></linearGradient></defs><path d="M1.5 1.5 h21 v25 h-21z" fill="url(#pgb)" stroke="#555" stroke-width="1.2" stroke-dasharray="28 3 4 3 30 60"/>
<path d="M1.5 26.5 L20 2 M4 26.5 L22.5 3" stroke="#333" stroke-width="1"/>
<circle cx="4.5" cy="9" r=".6" fill="#555"/><circle cx="4.5" cy="17" r=".6" fill="#555"/></svg>
<svg class="a" style="left:926px;top:73px" width="29" height="29" viewBox="0 0 29 29"><path d="M14.5 1 v27 M1 14.5 h27" stroke="#8a8aee" stroke-width="2"/>
<path d="M14.5 5 v19 M5 14.5 h19" stroke="#000080" stroke-width="5"/></svg>
<div class="vsep" style="left:968px;top:71px;height:35px"></div>
<svg class="a" style="left:984px;top:72px" width="26" height="30" viewBox="0 0 26 30"><defs><linearGradient id="tpg" x1="0" y1="0" x2="1" y2="1"><stop offset="0" stop-color="#e8e8e8"/><stop offset="1" stop-color="#f8f8f8"/></linearGradient></defs>
<rect x="1.5" y="1.5" width="23" height="27" fill="url(#tpg)" stroke="#8a8a8a" stroke-width="1"/>
<path d="M2 28.5 h22.5" stroke="#777" stroke-width="1.5"/>
<path d="M15.5 16.5 L21 22" stroke="#9a9a9a" stroke-width="3.4" stroke-linecap="round"/>
<path d="M15.5 16.5 L21 22" stroke="#c8c8c8" stroke-width="1.6" stroke-linecap="round"/>
<path d="M9.5 11 L14 15.5" stroke="#c8c8c8" stroke-width="2.6"/>
<path d="M7 8.5 a3.6 3.6 0 1 0 4.5 4.5" fill="none" stroke="#8a8a8a" stroke-width="1.6"/>
<path d="M6 11 a3.6 3.6 0 0 1 5 -5" fill="none" stroke="#8a8a8a" stroke-width="1.6"/>
<path d="M9.5 22.5 L15 17" stroke="#2a5ea8" stroke-width="3.6" stroke-linecap="round"/>
<path d="M14.5 8 C16 6.5 18 7.5 20.5 11 L21.5 12.5 L19.5 14 L17 11.5 L16 12.5 L14.5 11 Z" fill="#303a40"/></svg>
<div class="vsep" style="left:1024px;top:71px;height:35px"></div>
<div id="leftdock" class="a"></div><div id="ldiv" class="a"></div>
<div class="a" style="left:7px;top:116px;width:56px;height:2px;background:repeating-linear-gradient(90deg,#a8a8a8 0 2px,transparent 2px 6px)"></div>
<div class="tbtn" style="left:1px;top:122px"></div>
<svg class="a" style="left:1px;top:122px" width="35" height="35" viewBox="0 0 35 35"><path d="M7 10h6.5M10.25 6.75v6.5 M21 18.5h6.5M24.25 15.25v6.5 M7.5 25h6.5M10.75 21.75v6.5" stroke="#111" stroke-width="1"/><path d="M24.5 30.5 L30.5 24.5 L30.5 30.5 Z" fill="#000"/></svg>
<div class="tbtn" style="left:36px;top:122px"></div>
<svg class="a" style="left:36px;top:122px" width="35" height="35" viewBox="0 0 35 35"><path d="M5 21 L30 10" fill="none" stroke="#222" stroke-width="1.2"/><path d="M24.5 30.5 L30.5 24.5 L30.5 30.5 Z" fill="#000"/></svg>
<div class="tbtn" style="left:1px;top:157px"></div>
<svg class="a" style="left:1px;top:157px" width="35" height="35" viewBox="0 0 35 35"><path d="M7 25 C8 15 15 8 27 7" fill="none" stroke="#222" stroke-width="1.2"/><path d="M24.5 30.5 L30.5 24.5 L30.5 30.5 Z" fill="#000"/></svg>
<div class="tbtn" style="left:36px;top:157px"></div>
<svg class="a" style="left:36px;top:157px" width="35" height="35" viewBox="0 0 35 35"><circle cx="17.5" cy="16" r="10" fill="none" stroke="#222" stroke-width="1.2"/><path d="M24.5 30.5 L30.5 24.5 L30.5 30.5 Z" fill="#000"/></svg>
<div class="tbtn" style="left:1px;top:192px"></div>
<svg class="a" style="left:1px;top:192px" width="35" height="35" viewBox="0 0 35 35"><ellipse cx="16" cy="17" rx="13" ry="6.5" transform="rotate(-48 16 17)" fill="none" stroke="#222" stroke-width="1.2"/><path d="M24.5 30.5 L30.5 24.5 L30.5 30.5 Z" fill="#000"/></svg>
<div class="tbtn" style="left:36px;top:192px"></div>
<svg class="a" style="left:36px;top:192px" width="35" height="35" viewBox="0 0 35 35"><path d="M7 7 C3 12 7 28 13 25 C20 20 20 12 26 10 C32 9 31 22 26 20 C20 18 12 2 7 7 Z" fill="none" stroke="#222" stroke-width="1.2"/><path d="M24.5 30.5 L30.5 24.5 L30.5 30.5 Z" fill="#000"/></svg>
<div class="tbtn" style="left:1px;top:227px"></div>
<svg class="a" style="left:1px;top:227px" width="35" height="35" viewBox="0 0 35 35"><path d="M11 12 C6 13 6 21 12 21 L25 21" fill="none" stroke="#222" stroke-width="1.2"/><path d="M24.5 30.5 L30.5 24.5 L30.5 30.5 Z" fill="#000"/></svg>
<div class="tbtn" style="left:36px;top:227px"></div>
<svg class="a" style="left:36px;top:227px" width="35" height="35" viewBox="0 0 35 35"><path d="M4.6 11 L8 4.7 H15 L18.5 11 L15 17.4 H8 Z M19.8 17.6 L24.8 9.1 L29.9 17.6 Z M5.2 21.2 H19.8 V28.8 H5.2 Z" fill="none" stroke="#222" stroke-width="1.2"/><path d="M24.5 30.5 L30.5 24.5 L30.5 30.5 Z" fill="#000"/></svg>
<div class="tbtn" style="left:1px;top:262px"></div>
<svg class="a" style="left:1px;top:262px" width="35" height="35" viewBox="0 0 35 35"><path d="M12.6 10.1 H27.2 V24.4 H6 V16.6 Z" fill="#eee" stroke="#222" stroke-width="1.3" stroke-linejoin="round"/>
<path d="M7 22 L13 11 M10 24 L17 11 M14 24 L21 11 M18 24 L25 11 M22 24 L27 15 M26 24 L27 22" stroke="#666" stroke-width=".7"/>
<circle cx="19.6" cy="17.4" r="3.2" fill="#eee" stroke="#222" stroke-width="1.2"/><path d="M24.5 30.5 L30.5 24.5 L30.5 30.5 Z" fill="#000"/></svg>
<div class="tbtn" style="left:1px;top:305px"></div>
<svg class="a" style="left:1px;top:305px" width="35" height="35" viewBox="0 0 35 35"><text x="17.5" y="27" text-anchor="middle" font-family="Liberation Serif" font-size="28.5" fill="#000">A</text></svg>
<div class="tbtn" style="left:36px;top:305px"></div>
<svg class="a" style="left:36px;top:305px" width="35" height="35" viewBox="0 0 35 35"><path d="M7.3 9 V24.5 M25.4 9 V24.5 M7.3 11.4 H25.4" stroke="#222" stroke-width="1.2" fill="none"/><path d="M7.5 11.4 l4-1.8v3.6z M25.2 11.4 l-4-1.8v3.6z" fill="#111"/><path d="M24.5 30.5 L30.5 24.5 L30.5 30.5 Z" fill="#000"/></svg>
<div class="tbtn" style="left:1px;top:340px"></div>
<svg class="a" style="left:1px;top:340px" width="35" height="35" viewBox="0 0 35 35"><rect x="6" y="9" width="23" height="17" fill="#fff" stroke="#000" stroke-width="1.5"/><path d="M8 24 L14 16 L18 20 L22 15 L27 24 Z" fill="#000"/><circle cx="23" cy="12.5" r="1.8" fill="#000"/></svg>
<div class="tbtn" style="left:1px;top:383px"></div>
<svg class="a" style="left:1px;top:383px" width="35" height="35" viewBox="0 0 35 35"><path d="M4.5 10.7 V29.3 H23.5 Z M8.3 20 V25.8 H14 Z" fill="#fff" stroke="#111" stroke-width="1.2" fill-rule="evenodd" stroke-linejoin="round"/>
<path d="M9.5 5.5 L17.5 14.5" stroke="#7a2a10" stroke-width="3.6" stroke-linecap="round"/><path d="M9.5 5.5 L17.5 14.5" stroke="#e23b2a" stroke-width="2.4" stroke-linecap="round"/><path d="M17 14 l2 2.2 l-2.8-.6z" fill="#333"/>
<path d="M24.4 6 L22 22.5 M24.4 6 L28.4 21.5" stroke="#111" stroke-width="1.2" fill="none"/><circle cx="24.4" cy="5.2" r="1.2" fill="#111"/><path d="M24.5 30.5 L30.5 24.5 L30.5 30.5 Z" fill="#000"/></svg>
<div class="tbtn" style="left:36px;top:383px"></div>
<svg class="a" style="left:36px;top:383px" width="35" height="35" viewBox="0 0 35 35"><rect x="5" y="13" width="24" height="7" rx="1" fill="#fff" stroke="#333"/><path d="M8 13v3 M11 13v2 M14 13v3 M17 13v2 M20 13v3 M23 13v2 M26 13v3" stroke="#333" stroke-width=".8"/></svg>
<div class="tbtn" style="left:1px;top:418px"></div>
<svg class="a" style="left:1px;top:418px" width="35" height="35" viewBox="0 0 35 35"><rect x="6.4" y="7.4" width="17.1" height="12.3" fill="#f2eed8" stroke="#aaa" stroke-width=".9"/>
<circle cx="20.9" cy="18.8" r="7.2" fill="#f2eed8" fill-opacity=".85" stroke="#aaa" stroke-width=".9"/><circle cx="6.4" cy="19.7" r="1" fill="#f08080"/></svg>
<div class="tbtn" style="left:36px;top:418px"></div>
<svg class="a" style="left:36px;top:418px" width="35" height="35" viewBox="0 0 35 35"><path d="M5.7 15.8 L22.7 6" stroke="#e33" stroke-width="1.3"/>
<path d="M15.9 11.9 V24 L18.6 21.4 L20.6 25.6 L22.4 24.8 L20.5 20.6 L24 20.4 Z" fill="#fff" stroke="#555" stroke-width="1" stroke-linejoin="round"/><path d="M24.5 30.5 L30.5 24.5 L30.5 30.5 Z" fill="#000"/></svg>
<div class="tbtn" style="left:1px;top:461px"></div>
<svg class="a" style="left:1px;top:461px" width="35" height="35" viewBox="0 0 35 35"><path d="M7 12 L17 7 L29 11 V23 L18 28 L7 24 Z M7 12 L18 16 L29 11 M18 16 V28" fill="none" stroke="#222" stroke-width="1.2"/><path d="M24.5 30.5 L30.5 24.5 L30.5 30.5 Z" fill="#000"/></svg>
<div id="tabbar" class="a"></div>
<svg class="a" style="left:78px;top:115px" width="10" height="10" viewBox="0 0 10 10"><path d="M1 1 L9 9 M9 1 L1 9" stroke="#666" stroke-width="1.1"/></svg>
<svg class="a" style="left:95px;top:111px" width="15" height="15" viewBox="0 0 15 15"><circle cx="7" cy="7" r="6.2" fill="#e8e8f0" stroke="#2a3a8a" stroke-width="1.6"/>
<path d="M4 4 l3 3 M7 3 v4 h3" stroke="#c44" stroke-width=".6" fill="none"/>
<path d="M8 8 L12.5 13" stroke="#e8a020" stroke-width="2"/><circle cx="13" cy="13.5" r="1" fill="#d44"/></svg>
<div class="a" style="left:592px;top:112.75px;font-size:12px;color:#000;-webkit-text-stroke:.2px #000;white-space:nowrap">* birdhouse.dxf</div>
<svg class="a" style="left:72px;top:132px" width="1082" height="23" viewBox="72 132 1082 23"><rect x="72" y="132" width="1082" height="23" fill="#ececec"/><clipPath id="hrc"><rect x="93.5" y="132" width="1045.5" height="23"/></clipPath><g clip-path="url(#hrc)"><line x1="75.5" y1="148" x2="75.5" y2="155" stroke="#555" stroke-width="1"/><text x="75.0" y="141.6" text-anchor="middle" font-size="10" font-family="Liberation Sans" fill="#1a1a1a">-90</text><line x1="97.5" y1="148" x2="97.5" y2="155" stroke="#555" stroke-width="1"/><text x="97.7" y="141.6" text-anchor="middle" font-size="10" font-family="Liberation Sans" fill="#1a1a1a">-80</text><line x1="120.5" y1="148" x2="120.5" y2="155" stroke="#555" stroke-width="1"/><text x="120.5" y="141.6" text-anchor="middle" font-size="10" font-family="Liberation Sans" fill="#1a1a1a">-70</text><line x1="143.5" y1="148" x2="143.5" y2="155" stroke="#555" stroke-width="1"/><text x="143.2" y="141.6" text-anchor="middle" font-size="10" font-family="Liberation Sans" fill="#1a1a1a">-60</text><line x1="165.5" y1="148" x2="165.5" y2="155" stroke="#555" stroke-width="1"/><text x="165.9" y="141.6" text-anchor="middle" font-size="10" font-family="Liberation Sans" fill="#1a1a1a">-50</text><line x1="188.5" y1="148" x2="188.5" y2="155" stroke="#555" stroke-width="1"/><text x="188.6" y="141.6" text-anchor="middle" font-size="10" font-family="Liberation Sans" fill="#1a1a1a">-40</text><line x1="211.5" y1="148" x2="211.5" y2="155" stroke="#555" stroke-width="1"/><text x="211.3" y="141.6" text-anchor="middle" font-size="10" font-family="Liberation Sans" fill="#1a1a1a">-30</text><line x1="234.5" y1="148" x2="234.5" y2="155" stroke="#555" stroke-width="1"/><text x="234.1" y="141.6" text-anchor="middle" font-size="10" font-family="Liberation Sans" fill="#1a1a1a">-20</text><line x1="256.5" y1="148" x2="256.5" y2="155" stroke="#555" stroke-width="1"/><text x="256.8" y="141.6" text-anchor="middle" font-size="10" font-family="Liberation Sans" fill="#1a1a1a">-10</text><line x1="279.5" y1="148" x2="279.5" y2="155" stroke="#555" stroke-width="1"/><text x="279.5" y="141.6" text-anchor="middle" font-size="10" font-family="Liberation Sans" fill="#1a1a1a">0</text><line x1="302.5" y1="148" x2="302.5" y2="155" stroke="#555" stroke-width="1"/><text x="302.2" y="141.6" text-anchor="middle" font-size="10" font-family="Liberation Sans" fill="#1a1a1a">10</text><line x1="324.5" y1="148" x2="324.5" y2="155" stroke="#555" stroke-width="1"/><text x="324.9" y="141.6" text-anchor="middle" font-size="10" font-family="Liberation Sans" fill="#1a1a1a">20</text><line x1="347.5" y1="148" x2="347.5" y2="155" stroke="#555" stroke-width="1"/><text x="347.7" y="141.6" text-anchor="middle" font-size="10" font-family="Liberation Sans" fill="#1a1a1a">30</text><line x1="370.5" y1="148" x2="370.5" y2="155" stroke="#555" stroke-width="1"/><text x="370.4" y="141.6" text-anchor="middle" font-size="10" font-family="Liberation Sans" fill="#1a1a1a">40</text><line x1="393.5" y1="148" x2="393.5" y2="155" stroke="#555" stroke-width="1"/><text x="393.1" y="141.6" text-anchor="middle" font-size="10" font-family="Liberation Sans" fill="#1a1a1a">50</text><line x1="415.5" y1="148" x2="415.5" y2="155" stroke="#555" stroke-width="1"/><text x="415.8" y="141.6" text-anchor="middle" font-size="10" font-family="Liberation Sans" fill="#1a1a1a">60</text><line x1="438.5" y1="148" x2="438.5" y2="155" stroke="#555" stroke-width="1"/><text x="438.5" y="141.6" text-anchor="middle" font-size="10" font-family="Liberation Sans" fill="#1a1a1a">70</text><line x1="461.5" y1="148" x2="461.5" y2="155" stroke="#555" stroke-width="1"/><text x="461.3" y="141.6" text-anchor="middle" font-size="10" font-family="Liberation Sans" fill="#1a1a1a">80</text><line x1="483.5" y1="148" x2="483.5" y2="155" stroke="#555" stroke-width="1"/><text x="484.0" y="141.6" text-anchor="middle" font-size="10" font-family="Liberation Sans" fill="#1a1a1a">90</text><line x1="506.5" y1="148" x2="506.5" y2="155" stroke="#555" stroke-width="1"/><text x="506.7" y="141.6" text-anchor="middle" font-size="10" font-family="Liberation Sans" fill="#1a1a1a">100</text><line x1="529.5" y1="148" x2="529.5" y2="155" stroke="#555" stroke-width="1"/><text x="529.4" y="141.6" text-anchor="middle" font-size="10" font-family="Liberation Sans" fill="#1a1a1a">110</text><line x1="552.5" y1="148" x2="552.5" y2="155" stroke="#555" stroke-width="1"/><text x="552.1" y="141.6" text-anchor="middle" font-size="10" font-family="Liberation Sans" fill="#1a1a1a">120</text><line x1="574.5" y1="148" x2="574.5" y2="155" stroke="#555" stroke-width="1"/><text x="574.9" y="141.6" text-anchor="middle" font-size="10" font-family="Liberation Sans" fill="#1a1a1a">130</text><line x1="597.5" y1="148" x2="597.5" y2="155" stroke="#555" stroke-width="1"/><text x="597.6" y="141.6" text-anchor="middle" font-size="10" font-family="Liberation Sans" fill="#1a1a1a">140</text><line x1="620.5" y1="148" x2="620.5" y2="155" stroke="#555" stroke-width="1"/><text x="620.3" y="141.6" text-anchor="middle" font-size="10" font-family="Liberation Sans" fill="#1a1a1a">150</text><line x1="643.5" y1="148" x2="643.5" y2="155" stroke="#555" stroke-width="1"/><text x="643.0" y="141.6" text-anchor="middle" font-size="10" font-family="Liberation Sans" fill="#1a1a1a">160</text><line x1="665.5" y1="148" x2="665.5" y2="155" stroke="#555" stroke-width="1"/><text x="665.7" y="141.6" text-anchor="middle" font-size="10" font-family="Liberation Sans" fill="#1a1a1a">170</text><line x1="688.5" y1="148" x2="688.5" y2="155" stroke="#555" stroke-width="1"/><text x="688.5" y="141.6" text-anchor="middle" font-size="10" font-family="Liberation Sans" fill="#1a1a1a">180</text><line x1="711.5" y1="148" x2="711.5" y2="155" stroke="#555" stroke-width="1"/><text x="711.2" y="141.6" text-anchor="middle" font-size="10" font-family="Liberation Sans" fill="#1a1a1a">190</text><line x1="733.5" y1="148" x2="733.5" y2="155" stroke="#555" stroke-width="1"/><text x="733.9" y="141.6" text-anchor="middle" font-size="10" font-family="Liberation Sans" fill="#1a1a1a">200</text><line x1="756.5" y1="148" x2="756.5" y2="155" stroke="#555" stroke-width="1"/><text x="756.6" y="141.6" text-anchor="middle" font-size="10" font-family="Liberation Sans" fill="#1a1a1a">210</text><line x1="779.5" y1="148" x2="779.5" y2="155" stroke="#555" stroke-width="1"/><text x="779.3" y="141.6" text-anchor="middle" font-size="10" font-family="Liberation Sans" fill="#1a1a1a">220</text><line x1="802.5" y1="148" x2="802.5" y2="155" stroke="#555" stroke-width="1"/><text x="802.1" y="141.6" text-anchor="middle" font-size="10" font-family="Liberation Sans" fill="#1a1a1a">230</text><line x1="824.5" y1="148" x2="824.5" y2="155" stroke="#555" stroke-width="1"/><text x="824.8" y="141.6" text-anchor="middle" font-size="10" font-family="Liberation Sans" fill="#1a1a1a">240</text><line x1="847.5" y1="148" x2="847.5" y2="155" stroke="#555" stroke-width="1"/><text x="847.5" y="141.6" text-anchor="middle" font-size="10" font-family="Liberation Sans" fill="#1a1a1a">250</text><line x1="870.5" y1="148" x2="870.5" y2="155" stroke="#555" stroke-width="1"/><text x="870.2" y="141.6" text-anchor="middle" font-size="10" font-family="Liberation Sans" fill="#1a1a1a">260</text><line x1="892.5" y1="148" x2="892.5" y2="155" stroke="#555" stroke-width="1"/><text x="892.9" y="141.6" text-anchor="middle" font-size="10" font-family="Liberation Sans" fill="#1a1a1a">270</text><line x1="915.5" y1="148" x2="915.5" y2="155" stroke="#555" stroke-width="1"/><text x="915.7" y="141.6" text-anchor="middle" font-size="10" font-family="Liberation Sans" fill="#1a1a1a">280</text><line x1="938.5" y1="148" x2="938.5" y2="155" stroke="#555" stroke-width="1"/><text x="938.4" y="141.6" text-anchor="middle" font-size="10" font-family="Liberation Sans" fill="#1a1a1a">290</text><line x1="961.5" y1="148" x2="961.5" y2="155" stroke="#555" stroke-width="1"/><text x="961.1" y="141.6" text-anchor="middle" font-size="10" font-family="Liberation Sans" fill="#1a1a1a">300</text><line x1="983.5" y1="148" x2="983.5" y2="155" stroke="#555" stroke-width="1"/><text x="983.8" y="141.6" text-anchor="middle" font-size="10" font-family="Liberation Sans" fill="#1a1a1a">310</text><line x1="1006.5" y1="148" x2="1006.5" y2="155" stroke="#555" stroke-width="1"/><text x="1006.5" y="141.6" text-anchor="middle" font-size="10" font-family="Liberation Sans" fill="#1a1a1a">320</text><line x1="1029.5" y1="148" x2="1029.5" y2="155" stroke="#555" stroke-width="1"/><text x="1029.3" y="141.6" text-anchor="middle" font-size="10" font-family="Liberation Sans" fill="#1a1a1a">330</text><line x1="1051.5" y1="148" x2="1051.5" y2="155" stroke="#555" stroke-width="1"/><text x="1052.0" y="141.6" text-anchor="middle" font-size="10" font-family="Liberation Sans" fill="#1a1a1a">340</text><line x1="1074.5" y1="148" x2="1074.5" y2="155" stroke="#555" stroke-width="1"/><text x="1074.7" y="141.6" text-anchor="middle" font-size="10" font-family="Liberation Sans" fill="#1a1a1a">350</text><line x1="1097.5" y1="148" x2="1097.5" y2="155" stroke="#555" stroke-width="1"/><text x="1097.4" y="141.6" text-anchor="middle" font-size="10" font-family="Liberation Sans" fill="#1a1a1a">360</text><line x1="1120.5" y1="148" x2="1120.5" y2="155" stroke="#555" stroke-width="1"/><text x="1120.1" y="141.6" text-anchor="middle" font-size="10" font-family="Liberation Sans" fill="#1a1a1a">370</text><line x1="1142.5" y1="148" x2="1142.5" y2="155" stroke="#555" stroke-width="1"/><text x="1142.9" y="141.6" text-anchor="middle" font-size="10" font-family="Liberation Sans" fill="#1a1a1a">380</text><line x1="1165.5" y1="148" x2="1165.5" y2="155" stroke="#555" stroke-width="1"/><text x="1165.6" y="141.6" text-anchor="middle" font-size="10" font-family="Liberation Sans" fill="#1a1a1a">390</text></g></svg>
<svg class="a" style="left:72px;top:155px" width="23" height="593" viewBox="72 155 23 593"><rect x="72" y="155" width="23" height="593" fill="#ececec"/><clipPath id="vrc"><rect x="72" y="155" width="23" height="591"/></clipPath><g clip-path="url(#vrc)"><line x1="88" y1="727.5" x2="95" y2="727.5" stroke="#555" stroke-width="1"/><text transform="translate(81.6 727.3) rotate(-90)" text-anchor="middle" font-size="10" font-family="Liberation Sans" fill="#1a1a1a">-20</text><line x1="88" y1="704.5" x2="95" y2="704.5" stroke="#555" stroke-width="1"/><text transform="translate(81.6 704.6) rotate(-90)" text-anchor="middle" font-size="10" font-family="Liberation Sans" fill="#1a1a1a">-10</text><line x1="88" y1="681.5" x2="95" y2="681.5" stroke="#555" stroke-width="1"/><text transform="translate(81.6 681.9) rotate(-90)" text-anchor="middle" font-size="10" font-family="Liberation Sans" fill="#1a1a1a">0</text><line x1="88" y1="659.5" x2="95" y2="659.5" stroke="#555" stroke-width="1"/><text transform="translate(81.6 659.2) rotate(-90)" text-anchor="middle" font-size="10" font-family="Liberation Sans" fill="#1a1a1a">10</text><line x1="88" y1="636.5" x2="95" y2="636.5" stroke="#555" stroke-width="1"/><text transform="translate(81.6 636.5) rotate(-90)" text-anchor="middle" font-size="10" font-family="Liberation Sans" fill="#1a1a1a">20</text><line x1="88" y1="613.5" x2="95" y2="613.5" stroke="#555" stroke-width="1"/><text transform="translate(81.6 613.7) rotate(-90)" text-anchor="middle" font-size="10" font-family="Liberation Sans" fill="#1a1a1a">30</text><line x1="88" y1="591.5" x2="95" y2="591.5" stroke="#555" stroke-width="1"/><text transform="translate(81.6 591.0) rotate(-90)" text-anchor="middle" font-size="10" font-family="Liberation Sans" fill="#1a1a1a">40</text><line x1="88" y1="568.5" x2="95" y2="568.5" stroke="#555" stroke-width="1"/><text transform="translate(81.6 568.3) rotate(-90)" text-anchor="middle" font-size="10" font-family="Liberation Sans" fill="#1a1a1a">50</text><line x1="88" y1="545.5" x2="95" y2="545.5" stroke="#555" stroke-width="1"/><text transform="translate(81.6 545.6) rotate(-90)" text-anchor="middle" font-size="10" font-family="Liberation Sans" fill="#1a1a1a">60</text><line x1="88" y1="522.5" x2="95" y2="522.5" stroke="#555" stroke-width="1"/><text transform="translate(81.6 522.9) rotate(-90)" text-anchor="middle" font-size="10" font-family="Liberation Sans" fill="#1a1a1a">70</text><line x1="88" y1="500.5" x2="95" y2="500.5" stroke="#555" stroke-width="1"/><text transform="translate(81.6 500.1) rotate(-90)" text-anchor="middle" font-size="10" font-family="Liberation Sans" fill="#1a1a1a">80</text><line x1="88" y1="477.5" x2="95" y2="477.5" stroke="#555" stroke-width="1"/><text transform="translate(81.6 477.4) rotate(-90)" text-anchor="middle" font-size="10" font-family="Liberation Sans" fill="#1a1a1a">90</text><line x1="88" y1="454.5" x2="95" y2="454.5" stroke="#555" stroke-width="1"/><text transform="translate(81.6 454.7) rotate(-90)" text-anchor="middle" font-size="10" font-family="Liberation Sans" fill="#1a1a1a">100</text><line x1="88" y1="431.5" x2="95" y2="431.5" stroke="#555" stroke-width="1"/><text transform="translate(81.6 432.0) rotate(-90)" text-anchor="middle" font-size="10" font-family="Liberation Sans" fill="#1a1a1a">110</text><line x1="88" y1="409.5" x2="95" y2="409.5" stroke="#555" stroke-width="1"/><text transform="translate(81.6 409.3) rotate(-90)" text-anchor="middle" font-size="10" font-family="Liberation Sans" fill="#1a1a1a">120</text><line x1="88" y1="386.5" x2="95" y2="386.5" stroke="#555" stroke-width="1"/><text transform="translate(81.6 386.5) rotate(-90)" text-anchor="middle" font-size="10" font-family="Liberation Sans" fill="#1a1a1a">130</text><line x1="88" y1="363.5" x2="95" y2="363.5" stroke="#555" stroke-width="1"/><text transform="translate(81.6 363.8) rotate(-90)" text-anchor="middle" font-size="10" font-family="Liberation Sans" fill="#1a1a1a">140</text><line x1="88" y1="341.5" x2="95" y2="341.5" stroke="#555" stroke-width="1"/><text transform="translate(81.6 341.1) rotate(-90)" text-anchor="middle" font-size="10" font-family="Liberation Sans" fill="#1a1a1a">150</text><line x1="88" y1="318.5" x2="95" y2="318.5" stroke="#555" stroke-width="1"/><text transform="translate(81.6 318.4) rotate(-90)" text-anchor="middle" font-size="10" font-family="Liberation Sans" fill="#1a1a1a">160</text><line x1="88" y1="295.5" x2="95" y2="295.5" stroke="#555" stroke-width="1"/><text transform="translate(81.6 295.7) rotate(-90)" text-anchor="middle" font-size="10" font-family="Liberation Sans" fill="#1a1a1a">170</text><line x1="88" y1="272.5" x2="95" y2="272.5" stroke="#555" stroke-width="1"/><text transform="translate(81.6 272.9) rotate(-90)" text-anchor="middle" font-size="10" font-family="Liberation Sans" fill="#1a1a1a">180</text><line x1="88" y1="250.5" x2="95" y2="250.5" stroke="#555" stroke-width="1"/><text transform="translate(81.6 250.2) rotate(-90)" text-anchor="middle" font-size="10" font-family="Liberation Sans" fill="#1a1a1a">190</text><line x1="88" y1="227.5" x2="95" y2="227.5" stroke="#555" stroke-width="1"/><text transform="translate(81.6 227.5) rotate(-90)" text-anchor="middle" font-size="10" font-family="Liberation Sans" fill="#1a1a1a">200</text><line x1="88" y1="204.5" x2="95" y2="204.5" stroke="#555" stroke-width="1"/><text transform="translate(81.6 204.8) rotate(-90)" text-anchor="middle" font-size="10" font-family="Liberation Sans" fill="#1a1a1a">210</text><line x1="88" y1="182.5" x2="95" y2="182.5" stroke="#555" stroke-width="1"/><text transform="translate(81.6 182.1) rotate(-90)" text-anchor="middle" font-size="10" font-family="Liberation Sans" fill="#1a1a1a">220</text><line x1="88" y1="159.5" x2="95" y2="159.5" stroke="#555" stroke-width="1"/><text transform="translate(81.6 159.3) rotate(-90)" text-anchor="middle" font-size="10" font-family="Liberation Sans" fill="#1a1a1a">230</text><line x1="88" y1="136.5" x2="95" y2="136.5" stroke="#555" stroke-width="1"/><text transform="translate(81.6 136.6) rotate(-90)" text-anchor="middle" font-size="10" font-family="Liberation Sans" fill="#1a1a1a">240</text></g></svg>
<svg class="a" style="left:95px;top:155px" width="1044" height="577" viewBox="95 155 1044 577" shape-rendering="crispEdges"><rect x="95" y="155" width="1044" height="577" fill="#d3d3d3"/><rect x="289" y="215" width="675" height="476" fill="#808080"/><rect x="280" y="205" width="675" height="478" fill="#c8c8c8"/><rect x="281" y="206" width="672" height="475" fill="#ffffff"/><rect x="279" y="155" width="1" height="577" fill="#e2e2e2" opacity="0.32"/><rect x="506" y="155" width="1" height="577" fill="#e2e2e2" opacity="0.32"/><rect x="733" y="155" width="1" height="577" fill="#e2e2e2" opacity="0.32"/><rect x="961" y="155" width="1" height="577" fill="#e2e2e2" opacity="0.32"/><rect x="95" y="681" width="1044" height="1" fill="#e2e2e2" opacity="0.32"/><rect x="95" y="454" width="1044" height="1" fill="#e2e2e2" opacity="0.32"/><rect x="95" y="227" width="1044" height="1" fill="#e2e2e2" opacity="0.32"/><path d="M955 215 H964 V691 H289 V683 H955 Z" fill="#808080" opacity="0.88"/><path d="M97 727h1v1h-1zM97 704h1v1h-1zM97 681h1v1h-1zM97 659h1v1h-1zM97 636h1v1h-1zM97 613h1v1h-1zM97 591h1v1h-1zM97 568h1v1h-1zM97 545h1v1h-1zM97 522h1v1h-1zM97 500h1v1h-1zM97 477h1v1h-1zM97 454h1v1h-1zM97 431h1v1h-1zM97 409h1v1h-1zM97 386h1v1h-1zM97 363h1v1h-1zM97 341h1v1h-1zM97 318h1v1h-1zM97 295h1v1h-1zM97 272h1v1h-1zM97 250h1v1h-1zM97 227h1v1h-1zM97 204h1v1h-1zM97 182h1v1h-1zM97 159h1v1h-1zM120 727h1v1h-1zM120 704h1v1h-1zM120 681h1v1h-1zM120 659h1v1h-1zM120 636h1v1h-1zM120 613h1v1h-1zM120 591h1v1h-1zM120 568h1v1h-1zM120 545h1v1h-1zM120 522h1v1h-1zM120 500h1v1h-1zM120 477h1v1h-1zM120 454h1v1h-1zM120 431h1v1h-1zM120 409h1v1h-1zM120 386h1v1h-1zM120 363h1v1h-1zM120 341h1v1h-1zM120 318h1v1h-1zM120 295h1v1h-1zM120 272h1v1h-1zM120 250h1v1h-1zM120 227h1v1h-1zM120 204h1v1h-1zM120 182h1v1h-1zM120 159h1v1h-1zM143 727h1v1h-1zM143 704h1v1h-1zM143 681h1v1h-1zM143 659h1v1h-1zM143 636h1v1h-1zM143 613h1v1h-1zM143 591h1v1h-1zM143 568h1v1h-1zM143 545h1v1h-1zM143 522h1v1h-1zM143 500h1v1h-1zM143 477h1v1h-1zM143 454h1v1h-1zM143 431h1v1h-1zM143 409h1v1h-1zM143 386h1v1h-1zM143 363h1v1h-1zM143 341h1v1h-1zM143 318h1v1h-1zM143 295h1v1h-1zM143 272h1v1h-1zM143 250h1v1h-1zM143 227h1v1h-1zM143 204h1v1h-1zM143 182h1v1h-1zM143 159h1v1h-1zM165 727h1v1h-1zM165 704h1v1h-1zM165 681h1v1h-1zM165 659h1v1h-1zM165 636h1v1h-1zM165 613h1v1h-1zM165 591h1v1h-1zM165 568h1v1h-1zM165 545h1v1h-1zM165 522h1v1h-1zM165 500h1v1h-1zM165 477h1v1h-1zM165 454h1v1h-1zM165 431h1v1h-1zM165 409h1v1h-1zM165 386h1v1h-1zM165 363h1v1h-1zM165 341h1v1h-1zM165 318h1v1h-1zM165 295h1v1h-1zM165 272h1v1h-1zM165 250h1v1h-1zM165 227h1v1h-1zM165 204h1v1h-1zM165 182h1v1h-1zM165 159h1v1h-1zM188 727h1v1h-1zM188 704h1v1h-1zM188 681h1v1h-1zM188 659h1v1h-1zM188 636h1v1h-1zM188 613h1v1h-1zM188 591h1v1h-1zM188 568h1v1h-1zM188 545h1v1h-1zM188 522h1v1h-1zM188 500h1v1h-1zM188 477h1v1h-1zM188 454h1v1h-1zM188 431h1v1h-1zM188 409h1v1h-1zM188 386h1v1h-1zM188 363h1v1h-1zM188 341h1v1h-1zM188 318h1v1h-1zM188 295h1v1h-1zM188 272h1v1h-1zM188 250h1v1h-1zM188 227h1v1h-1zM188 204h1v1h-1zM188 182h1v1h-1zM188 159h1v1h-1zM211 727h1v1h-1zM211 704h1v1h-1zM211 681h1v1h-1zM211 659h1v1h-1zM211 636h1v1h-1zM211 613h1v1h-1zM211 591h1v1h-1zM211 568h1v1h-1zM211 545h1v1h-1zM211 522h1v1h-1zM211 500h1v1h-1zM211 477h1v1h-1zM211 454h1v1h-1zM211 431h1v1h-1zM211 409h1v1h-1zM211 386h1v1h-1zM211 363h1v1h-1zM211 341h1v1h-1zM211 318h1v1h-1zM211 295h1v1h-1zM211 272h1v1h-1zM211 250h1v1h-1zM211 227h1v1h-1zM211 204h1v1h-1zM211 182h1v1h-1zM211 159h1v1h-1zM234 727h1v1h-1zM234 704h1v1h-1zM234 681h1v1h-1zM234 659h1v1h-1zM234 636h1v1h-1zM234 613h1v1h-1zM234 591h1v1h-1zM234 568h1v1h-1zM234 545h1v1h-1zM234 522h1v1h-1zM234 500h1v1h-1zM234 477h1v1h-1zM234 454h1v1h-1zM234 431h1v1h-1zM234 409h1v1h-1zM234 386h1v1h-1zM234 363h1v1h-1zM234 341h1v1h-1zM234 318h1v1h-1zM234 295h1v1h-1zM234 272h1v1h-1zM234 250h1v1h-1zM234 227h1v1h-1zM234 204h1v1h-1zM234 182h1v1h-1zM234 159h1v1h-1zM256 727h1v1h-1zM256 704h1v1h-1zM256 681h1v1h-1zM256 659h1v1h-1zM256 636h1v1h-1zM256 613h1v1h-1zM256 591h1v1h-1zM256 568h1v1h-1zM256 545h1v1h-1zM256 522h1v1h-1zM256 500h1v1h-1zM256 477h1v1h-1zM256 454h1v1h-1zM256 431h1v1h-1zM256 409h1v1h-1zM256 386h1v1h-1zM256 363h1v1h-1zM256 341h1v1h-1zM256 318h1v1h-1zM256 295h1v1h-1zM256 272h1v1h-1zM256 250h1v1h-1zM256 227h1v1h-1zM256 204h1v1h-1zM256 182h1v1h-1zM256 159h1v1h-1zM279 727h1v1h-1zM279 704h1v1h-1zM279 681h1v1h-1zM279 659h1v1h-1zM279 636h1v1h-1zM279 613h1v1h-1zM279 591h1v1h-1zM279 568h1v1h-1zM279 545h1v1h-1zM279 522h1v1h-1zM279 500h1v1h-1zM279 477h1v1h-1zM279 454h1v1h-1zM279 431h1v1h-1zM279 409h1v1h-1zM279 386h1v1h-1zM279 363h1v1h-1zM279 341h1v1h-1zM279 318h1v1h-1zM279 295h1v1h-1zM279 272h1v1h-1zM279 250h1v1h-1zM279 227h1v1h-1zM279 204h1v1h-1zM279 182h1v1h-1zM279 159h1v1h-1zM302 727h1v1h-1zM302 704h1v1h-1zM302 204h1v1h-1zM302 182h1v1h-1zM302 159h1v1h-1zM324 727h1v1h-1zM324 704h1v1h-1zM324 204h1v1h-1zM324 182h1v1h-1zM324 159h1v1h-1zM347 727h1v1h-1zM347 704h1v1h-1zM347 204h1v1h-1zM347 182h1v1h-1zM347 159h1v1h-1zM370 727h1v1h-1zM370 704h1v1h-1zM370 204h1v1h-1zM370 182h1v1h-1zM370 159h1v1h-1zM393 727h1v1h-1zM393 704h1v1h-1zM393 204h1v1h-1zM393 182h1v1h-1zM393 159h1v1h-1zM415 727h1v1h-1zM415 704h1v1h-1zM415 204h1v1h-1zM415 182h1v1h-1zM415 159h1v1h-1zM438 727h1v1h-1zM438 704h1v1h-1zM438 204h1v1h-1zM438 182h1v1h-1zM438 159h1v1h-1zM461 727h1v1h-1zM461 704h1v1h-1zM461 204h1v1h-1zM461 182h1v1h-1zM461 159h1v1h-1zM483 727h1v1h-1zM483 704h1v1h-1zM483 204h1v1h-1zM483 182h1v1h-1zM483 159h1v1h-1zM506 727h1v1h-1zM506 704h1v1h-1zM506 204h1v1h-1zM506 182h1v1h-1zM506 159h1v1h-1zM529 727h1v1h-1zM529 704h1v1h-1zM529 204h1v1h-1zM529 182h1v1h-1zM529 159h1v1h-1zM552 727h1v1h-1zM552 704h1v1h-1zM552 204h1v1h-1zM552 182h1v1h-1zM552 159h1v1h-1zM574 727h1v1h-1zM574 704h1v1h-1zM574 204h1v1h-1zM574 182h1v1h-1zM574 159h1v1h-1zM597 727h1v1h-1zM597 704h1v1h-1zM597 204h1v1h-1zM597 182h1v1h-1zM597 159h1v1h-1zM620 727h1v1h-1zM620 704h1v1h-1zM620 204h1v1h-1zM620 182h1v1h-1zM620 159h1v1h-1zM643 727h1v1h-1zM643 704h1v1h-1zM643 204h1v1h-1zM643 182h1v1h-1zM643 159h1v1h-1zM665 727h1v1h-1zM665 704h1v1h-1zM665 204h1v1h-1zM665 182h1v1h-1zM665 159h1v1h-1zM688 727h1v1h-1zM688 704h1v1h-1zM688 204h1v1h-1zM688 182h1v1h-1zM688 159h1v1h-1zM711 727h1v1h-1zM711 704h1v1h-1zM711 204h1v1h-1zM711 182h1v1h-1zM711 159h1v1h-1zM733 727h1v1h-1zM733 704h1v1h-1zM733 204h1v1h-1zM733 182h1v1h-1zM733 159h1v1h-1zM756 727h1v1h-1zM756 704h1v1h-1zM756 204h1v1h-1zM756 182h1v1h-1zM756 159h1v1h-1zM779 727h1v1h-1zM779 704h1v1h-1zM779 204h1v1h-1zM779 182h1v1h-1zM779 159h1v1h-1zM802 727h1v1h-1zM802 704h1v1h-1zM802 204h1v1h-1zM802 182h1v1h-1zM802 159h1v1h-1zM824 727h1v1h-1zM824 704h1v1h-1zM824 204h1v1h-1zM824 182h1v1h-1zM824 159h1v1h-1zM847 727h1v1h-1zM847 704h1v1h-1zM847 204h1v1h-1zM847 182h1v1h-1zM847 159h1v1h-1zM870 727h1v1h-1zM870 704h1v1h-1zM870 204h1v1h-1zM870 182h1v1h-1zM870 159h1v1h-1zM892 727h1v1h-1zM892 704h1v1h-1zM892 204h1v1h-1zM892 182h1v1h-1zM892 159h1v1h-1zM915 727h1v1h-1zM915 704h1v1h-1zM915 204h1v1h-1zM915 182h1v1h-1zM915 159h1v1h-1zM938 727h1v1h-1zM938 704h1v1h-1zM938 204h1v1h-1zM938 182h1v1h-1zM938 159h1v1h-1zM961 727h1v1h-1zM961 704h1v1h-1zM961 204h1v1h-1zM961 182h1v1h-1zM961 159h1v1h-1zM983 727h1v1h-1zM983 704h1v1h-1zM983 681h1v1h-1zM983 659h1v1h-1zM983 636h1v1h-1zM983 613h1v1h-1zM983 591h1v1h-1zM983 568h1v1h-1zM983 545h1v1h-1zM983 522h1v1h-1zM983 500h1v1h-1zM983 477h1v1h-1zM983 454h1v1h-1zM983 431h1v1h-1zM983 409h1v1h-1zM983 386h1v1h-1zM983 363h1v1h-1zM983 341h1v1h-1zM983 318h1v1h-1zM983 295h1v1h-1zM983 272h1v1h-1zM983 250h1v1h-1zM983 227h1v1h-1zM983 204h1v1h-1zM983 182h1v1h-1zM983 159h1v1h-1zM1006 727h1v1h-1zM1006 704h1v1h-1zM1006 681h1v1h-1zM1006 659h1v1h-1zM1006 636h1v1h-1zM1006 613h1v1h-1zM1006 591h1v1h-1zM1006 568h1v1h-1zM1006 545h1v1h-1zM1006 522h1v1h-1zM1006 500h1v1h-1zM1006 477h1v1h-1zM1006 454h1v1h-1zM1006 431h1v1h-1zM1006 409h1v1h-1zM1006 386h1v1h-1zM1006 363h1v1h-1zM1006 341h1v1h-1zM1006 318h1v1h-1zM1006 295h1v1h-1zM1006 272h1v1h-1zM1006 250h1v1h-1zM1006 227h1v1h-1zM1006 204h1v1h-1zM1006 182h1v1h-1zM1006 159h1v1h-1zM1029 727h1v1h-1zM1029 704h1v1h-1zM1029 681h1v1h-1zM1029 659h1v1h-1zM1029 636h1v1h-1zM1029 613h1v1h-1zM1029 591h1v1h-1zM1029 568h1v1h-1zM1029 545h1v1h-1zM1029 522h1v1h-1zM1029 500h1v1h-1zM1029 477h1v1h-1zM1029 454h1v1h-1zM1029 431h1v1h-1zM1029 409h1v1h-1zM1029 386h1v1h-1zM1029 363h1v1h-1zM1029 341h1v1h-1zM1029 318h1v1h-1zM1029 295h1v1h-1zM1029 272h1v1h-1zM1029 250h1v1h-1zM1029 227h1v1h-1zM1029 204h1v1h-1zM1029 182h1v1h-1zM1029 159h1v1h-1zM1051 727h1v1h-1zM1051 704h1v1h-1zM1051 681h1v1h-1zM1051 659h1v1h-1zM1051 636h1v1h-1zM1051 613h1v1h-1zM1051 591h1v1h-1zM1051 568h1v1h-1zM1051 545h1v1h-1zM1051 522h1v1h-1zM1051 500h1v1h-1zM1051 477h1v1h-1zM1051 454h1v1h-1zM1051 431h1v1h-1zM1051 409h1v1h-1zM1051 386h1v1h-1zM1051 363h1v1h-1zM1051 341h1v1h-1zM1051 318h1v1h-1zM1051 295h1v1h-1zM1051 272h1v1h-1zM1051 250h1v1h-1zM1051 227h1v1h-1zM1051 204h1v1h-1zM1051 182h1v1h-1zM1051 159h1v1h-1zM1074 727h1v1h-1zM1074 704h1v1h-1zM1074 681h1v1h-1zM1074 659h1v1h-1zM1074 636h1v1h-1zM1074 613h1v1h-1zM1074 591h1v1h-1zM1074 568h1v1h-1zM1074 545h1v1h-1zM1074 522h1v1h-1zM1074 500h1v1h-1zM1074 477h1v1h-1zM1074 454h1v1h-1zM1074 431h1v1h-1zM1074 409h1v1h-1zM1074 386h1v1h-1zM1074 363h1v1h-1zM1074 341h1v1h-1zM1074 318h1v1h-1zM1074 295h1v1h-1zM1074 272h1v1h-1zM1074 250h1v1h-1zM1074 227h1v1h-1zM1074 204h1v1h-1zM1074 182h1v1h-1zM1074 159h1v1h-1zM1097 727h1v1h-1zM1097 704h1v1h-1zM1097 681h1v1h-1zM1097 659h1v1h-1zM1097 636h1v1h-1zM1097 613h1v1h-1zM1097 591h1v1h-1zM1097 568h1v1h-1zM1097 545h1v1h-1zM1097 522h1v1h-1zM1097 500h1v1h-1zM1097 477h1v1h-1zM1097 454h1v1h-1zM1097 431h1v1h-1zM1097 409h1v1h-1zM1097 386h1v1h-1zM1097 363h1v1h-1zM1097 341h1v1h-1zM1097 318h1v1h-1zM1097 295h1v1h-1zM1097 272h1v1h-1zM1097 250h1v1h-1zM1097 227h1v1h-1zM1097 204h1v1h-1zM1097 182h1v1h-1zM1097 159h1v1h-1zM1120 727h1v1h-1zM1120 704h1v1h-1zM1120 681h1v1h-1zM1120 659h1v1h-1zM1120 636h1v1h-1zM1120 613h1v1h-1zM1120 591h1v1h-1zM1120 568h1v1h-1zM1120 545h1v1h-1zM1120 522h1v1h-1zM1120 500h1v1h-1zM1120 477h1v1h-1zM1120 454h1v1h-1zM1120 431h1v1h-1zM1120 409h1v1h-1zM1120 386h1v1h-1zM1120 363h1v1h-1zM1120 341h1v1h-1zM1120 318h1v1h-1zM1120 295h1v1h-1zM1120 272h1v1h-1zM1120 250h1v1h-1zM1120 227h1v1h-1zM1120 204h1v1h-1zM1120 182h1v1h-1zM1120 159h1v1h-1z" fill="#e6e6e6" style="mix-blend-mode:lighten"/><path d="M302 227 H932 V659 H302 Z" fill="none" stroke="#8484fa" stroke-width="2.6" shape-rendering="geometricPrecision" transform="translate(0.2,0.6)"/><g shape-rendering="geometricPrecision"><line x1="259" y1="681.9" x2="300" y2="681.9" stroke="#e05050" stroke-width="1" opacity=".75"/><line x1="279.5" y1="662" x2="279.5" y2="702" stroke="#e02020" stroke-width="1"/><circle cx="279.5" cy="681.9" r="5.5" fill="none" stroke="#e02020" stroke-width="1"/></g></svg>
<div id="vscroll" class="a"></div>
<div class="a" style="left:1143px;top:158px;width:8px;height:411px;background:#808080;border-radius:4px"></div>
<div id="hscroll" class="a"></div>
<div id="zoomlbl" class="a">10 &lt; 100</div>
<div class="a" style="left:72px;top:748px;width:1081px;height:2px;background:#b6b6b6"></div>
<div class="a" style="left:72px;top:750px;width:1081px;height:20px;background:#fff"></div>
<div class="a" style="left:77px;top:750.75px;font-size:13.3px;color:#1010d0;white-space:nowrap;-webkit-text-stroke:.2px #1010d0"><i>Commande:</i> blockedit</div>
<div class="a" style="left:1139px;top:750px;width:14px;height:20px;background:#f6f6f6;border-left:1px solid #ececec"></div>
<div class="a" style="left:1142px;top:750.5px;width:8px;height:17px;background:#808080;border-radius:4px"></div>
<div class="a" style="left:72px;top:770px;width:1081px;height:1px;background:#c0c0c0"></div>
<div class="a" style="left:72px;top:771px;width:1081px;height:28px;background:#ececec;border-bottom:1px solid #d4d4d4"></div>
<div class="a" style="left:73px;top:777.9px;font-size:13.1px;color:#000;white-space:nowrap;-webkit-text-stroke:.2px #000">Commande :</div>
<div class="a" style="left:153px;top:776px;width:974px;height:18px;background:#fff"></div>
<div class="a" style="left:1127px;top:772px;width:26px;height:25px;border:1px solid #bdbdbd;background:linear-gradient(#f0f0f0,#e4e4e4)"></div>
<svg class="a" style="left:1132px;top:779px" width="16" height="11" viewBox="0 0 16 11"><rect x=".5" y=".5" width="14" height="10" fill="#e8e8e8" stroke="#333"/><rect x=".5" y=".5" width="14" height="2.5" fill="#000"/><rect x="11" y="1" width="1" height="1" fill="#fff"/></svg>
<div class="a" style="left:1154px;top:108px;width:1px;height:691px;background:#eeeeee"></div>
<div class="a" style="left:1155px;top:108px;width:300px;height:23px;background:linear-gradient(#e9e9e9,#dedede);"></div>
<svg class="a" style="left:1156px;top:110px" width="36" height="18" viewBox="0 0 36 18"><circle cx="8" cy="8" r="7" fill="#6b6b6b"/><path d="M4.9 4.9 L11.1 11.1 M11.1 4.9 L4.9 11.1" stroke="#fff" stroke-width="1.5"/>
<circle cx="26" cy="8" r="7" fill="#6b6b6b"/><rect x="22.5" y="7" width="5.5" height="4.5" fill="none" stroke="#fff" stroke-width="1.1"/><path d="M24.5 7 V5 H30 V9.5 H28" fill="none" stroke="#fff" stroke-width="1.1"/></svg>
<div class="a" style="left:1155px;top:112.5px;width:300px;text-align:center;padding-left:34px;font-size:11.9px;color:#222;white-space:nowrap;-webkit-text-stroke:.15px #222">Liste des blocs</div>
<div class="a" style="left:1155px;top:130px;width:300px;height:27px;background:#ababab"></div>
<div class="a" style="left:1156px;top:131px;width:36px;height:24px;background:linear-gradient(#e4e4e4,#f6f6f6)"></div>
<svg class="a" style="left:1166.0px;top:137px" width="16" height="12" viewBox="0 0 16 12"><g transform="scale(1.0)"><path d="M0.3 5.6 C2 1.2 5 0 7.8 0 C10.5 0 13.8 1.2 15.6 5.6 C13.8 10.2 10.5 11.3 7.8 11.3 C5 11.3 2 10.2 0.3 5.6 Z" fill="#000"/>
<path d="M3.4 6.2 C4.6 3.9 6.2 3.3 7.8 3.3 C9.4 3.3 11 3.9 12.2 6.2 C11 8.3 9.4 8.7 7.8 8.7 C6.2 8.7 4.6 8.3 3.4 6.2 Z" fill="#fff"/>
<circle cx="7.8" cy="5.9" r="2.4" fill="#000"/><path d="M6.9 4.6 l.9 1.2" stroke="#999" stroke-width=".6"/></g></svg>
<div class="a" style="left:1194px;top:131px;width:36px;height:24px;background:linear-gradient(#e4e4e4,#f6f6f6)"></div>
<svg class="a" style="left:1204.0px;top:137px" width="16" height="12" viewBox="0 0 16 12"><g transform="scale(1.0)"><path d="M0.3 5.6 C2 1.2 5 0 7.8 0 C10.5 0 13.8 1.2 15.6 5.6 C13.8 10.2 10.5 11.3 7.8 11.3 C5 11.3 2 10.2 0.3 5.6 Z" fill="#9a9a9a"/>
<path d="M3.4 6.2 C4.6 3.9 6.2 3.3 7.8 3.3 C9.4 3.3 11 3.9 12.2 6.2 C11 8.3 9.4 8.7 7.8 8.7 C6.2 8.7 4.6 8.3 3.4 6.2 Z" fill="#fff"/>
<circle cx="7.8" cy="5.9" r="2.4" fill="#9a9a9a"/><path d="M6.9 4.6 l.9 1.2" stroke="#999" stroke-width=".6"/></g></svg>
<div class="a" style="left:1232px;top:131px;width:35px;height:24px;background:linear-gradient(#e4e4e4,#f6f6f6)"></div>
<svg class="a" style="left:1241.5px;top:135px" width="16" height="16" viewBox="0 0 16 16"><path d="M8 2 V14 M2 8 H14" stroke="#e00" stroke-width="3"/></svg>
<div class="a" style="left:1269px;top:131px;width:36px;height:24px;background:linear-gradient(#e4e4e4,#f6f6f6)"></div>
<svg class="a" style="left:1279.0px;top:135px" width="16" height="16" viewBox="0 0 16 16"><path d="M2 8 H14" stroke="#e00" stroke-width="3"/></svg>
<div class="a" style="left:1307px;top:131px;width:35px;height:24px;background:linear-gradient(#e4e4e4,#f6f6f6)"></div>
<div class="a" style="left:1314.5px;top:136.5px;width:20px;text-align:center;font-size:11px;color:#222">a<span style="display:inline-block;width:1px;height:12px;background:#333;vertical-align:-3px;margin:0 1px"></span>b</div>
<div class="a" style="left:1344px;top:131px;width:35px;height:24px;background:linear-gradient(#e4e4e4,#f6f6f6)"></div>
<svg class="a" style="left:1353.5px;top:135px" width="16" height="16" viewBox="0 0 16 16"><path d="M1 14 L2 10.5 L11.5 1 L14 3.5 L4.5 13 Z" fill="#e0b060" stroke="#9a7a30" stroke-width=".7"/>
<path d="M11.5 1 L12.5 0.2 L14.8 2.5 L14 3.5 Z" fill="#e04848"/>
<path d="M1 14 L2 10.5 L4.5 13 Z" fill="#f4e0c0"/><path d="M1 14 l.7-2 l1.3 1.3z" fill="#333"/></svg>
<div class="a" style="left:1381px;top:131px;width:36px;height:24px;background:linear-gradient(#e4e4e4,#f6f6f6)"></div>
<svg class="a" style="left:1392.0px;top:135px" width="14" height="16" viewBox="0 0 14 16"><rect x="1" y="2" width="11.5" height="12.5" fill="#f0f0ee" stroke="#dcdcdc" stroke-width=".6"/><path d="M2.5 4.2 C5 3.5 7 4 7 7 V11" fill="none" stroke="#7a9cf8" stroke-width="2.2"/><path d="M3.5 10 h7 l-3.5 4.5z" fill="#7a9cf8"/></svg>
<div class="a" style="left:1419px;top:131px;width:35px;height:24px;background:linear-gradient(#e4e4e4,#f6f6f6)"></div>
<svg class="a" style="left:1430.5px;top:137px" width="12" height="12" viewBox="0 0 12 12"><rect x="1" y="1" width="10" height="10" rx="1" fill="#e2845a" stroke="#e03a22" stroke-width="1.4"/><path d="M3.8 3.8 L8.2 8.2 M8.2 3.8 L3.8 8.2" stroke="#fff" stroke-width="1.5"/></svg>
<div class="a" style="left:1155px;top:156px;width:300px;height:169px;background:#fff;border-left:1px solid #b4b4b4;border-bottom:1px solid #b0b0b0"></div>
<div class="a" style="left:1156px;top:177px;width:299px;height:20px;background:#d4d4d4"></div>
<svg class="a" style="left:1161px;top:161px" width="16" height="12" viewBox="0 0 16 12"><g transform="scale(1.0)"><path d="M0.3 5.6 C2 1.2 5 0 7.8 0 C10.5 0 13.8 1.2 15.6 5.6 C13.8 10.2 10.5 11.3 7.8 11.3 C5 11.3 2 10.2 0.3 5.6 Z" fill="#000"/>
<path d="M3.4 6.2 C4.6 3.9 6.2 3.3 7.8 3.3 C9.4 3.3 11 3.9 12.2 6.2 C11 8.3 9.4 8.7 7.8 8.7 C6.2 8.7 4.6 8.3 3.4 6.2 Z" fill="#fff"/>
<circle cx="7.8" cy="5.9" r="2.4" fill="#000"/><path d="M6.9 4.6 l.9 1.2" stroke="#999" stroke-width=".6"/></g></svg>
<div class="a" style="left:1205px;top:159.3px;font-size:13.2px;color:#000;white-space:nowrap;-webkit-text-stroke:.25px #000">Model (*Model_Space)</div>
<svg class="a" style="left:1161px;top:181px" width="16" height="12" viewBox="0 0 16 12"><g transform="scale(1.0)"><path d="M0.3 5.6 C2 1.2 5 0 7.8 0 C10.5 0 13.8 1.2 15.6 5.6 C13.8 10.2 10.5 11.3 7.8 11.3 C5 11.3 2 10.2 0.3 5.6 Z" fill="#3a4a60"/>
<path d="M3.4 6.2 C4.6 3.9 6.2 3.3 7.8 3.3 C9.4 3.3 11 3.9 12.2 6.2 C11 8.3 9.4 8.7 7.8 8.7 C6.2 8.7 4.6 8.3 3.4 6.2 Z" fill="#fff"/>
<circle cx="7.8" cy="5.9" r="2.4" fill="#3a4a60"/><path d="M6.9 4.6 l.9 1.2" stroke="#999" stroke-width=".6"/></g></svg>
<div class="a" style="left:1205px;top:179.3px;font-size:13.2px;color:#000;white-space:nowrap;-webkit-text-stroke:.25px #000">Layout1 (*Paper_Space)</div>
<svg class="a" style="left:1161px;top:201px" width="16" height="12" viewBox="0 0 16 12"><g transform="scale(1.0)"><path d="M0.3 5.6 C2 1.2 5 0 7.8 0 C10.5 0 13.8 1.2 15.6 5.6 C13.8 10.2 10.5 11.3 7.8 11.3 C5 11.3 2 10.2 0.3 5.6 Z" fill="#000"/>
<path d="M3.4 6.2 C4.6 3.9 6.2 3.3 7.8 3.3 C9.4 3.3 11 3.9 12.2 6.2 C11 8.3 9.4 8.7 7.8 8.7 C6.2 8.7 4.6 8.3 3.4 6.2 Z" fill="#fff"/>
<circle cx="7.8" cy="5.9" r="2.4" fill="#000"/><path d="M6.9 4.6 l.9 1.2" stroke="#999" stroke-width=".6"/></g></svg>
<div class="a" style="left:1205px;top:199.3px;font-size:13.2px;color:#000;white-space:nowrap;-webkit-text-stroke:.25px #000">Bordure</div>
<svg class="a" style="left:1183px;top:179px" width="16" height="16" viewBox="0 0 16 16"><path d="M1 14 L2 10.5 L11.5 1 L14 3.5 L4.5 13 Z" fill="#e0b060" stroke="#9a7a30" stroke-width=".7"/>
<path d="M11.5 1 L12.5 0.2 L14.8 2.5 L14 3.5 Z" fill="#e04848"/>
<path d="M1 14 L2 10.5 L4.5 13 Z" fill="#f4e0c0"/><path d="M1 14 l.7-2 l1.3 1.3z" fill="#333"/></svg>
<div class="a" style="left:1155px;top:325px;width:300px;height:23px;background:linear-gradient(#e9e9e9,#dedede);"></div>
<svg class="a" style="left:1156px;top:328px" width="36" height="18" viewBox="0 0 36 18"><circle cx="8" cy="8" r="7" fill="#6b6b6b"/><path d="M4.9 4.9 L11.1 11.1 M11.1 4.9 L4.9 11.1" stroke="#fff" stroke-width="1.5"/>
<circle cx="26" cy="8" r="7" fill="#6b6b6b"/><rect x="22.5" y="7" width="5.5" height="4.5" fill="none" stroke="#fff" stroke-width="1.1"/><path d="M24.5 7 V5 H30 V9.5 H28" fill="none" stroke="#fff" stroke-width="1.1"/></svg>
<div class="a" style="left:1155px;top:330.5px;width:300px;text-align:center;padding-left:34px;font-size:11.9px;color:#222;white-space:nowrap;-webkit-text-stroke:.15px #222">Liste des calques</div>
<div class="a" style="left:1155px;top:348px;width:300px;height:26px;background:#ababab"></div>
<div class="a" style="left:1156px;top:349px;width:59px;height:23px;background:linear-gradient(#e4e4e4,#f6f6f6)"></div>
<svg class="a" style="left:1177.5px;top:355px" width="16" height="12" viewBox="0 0 16 12"><g transform="scale(1.0)"><path d="M0.3 5.6 C2 1.2 5 0 7.8 0 C10.5 0 13.8 1.2 15.6 5.6 C13.8 10.2 10.5 11.3 7.8 11.3 C5 11.3 2 10.2 0.3 5.6 Z" fill="#000"/>
<path d="M3.4 6.2 C4.6 3.9 6.2 3.3 7.8 3.3 C9.4 3.3 11 3.9 12.2 6.2 C11 8.3 9.4 8.7 7.8 8.7 C6.2 8.7 4.6 8.3 3.4 6.2 Z" fill="#fff"/>
<circle cx="7.8" cy="5.9" r="2.4" fill="#000"/><path d="M6.9 4.6 l.9 1.2" stroke="#999" stroke-width=".6"/></g></svg>
<div class="a" style="left:1217px;top:349px;width:58px;height:23px;background:linear-gradient(#e4e4e4,#f6f6f6)"></div>
<svg class="a" style="left:1238.0px;top:355px" width="16" height="12" viewBox="0 0 16 12"><g transform="scale(1.0)"><path d="M0.3 5.6 C2 1.2 5 0 7.8 0 C10.5 0 13.8 1.2 15.6 5.6 C13.8 10.2 10.5 11.3 7.8 11.3 C5 11.3 2 10.2 0.3 5.6 Z" fill="#9a9a9a"/>
<path d="M3.4 6.2 C4.6 3.9 6.2 3.3 7.8 3.3 C9.4 3.3 11 3.9 12.2 6.2 C11 8.3 9.4 8.7 7.8 8.7 C6.2 8.7 4.6 8.3 3.4 6.2 Z" fill="#fff"/>
<circle cx="7.8" cy="5.9" r="2.4" fill="#9a9a9a"/><path d="M6.9 4.6 l.9 1.2" stroke="#999" stroke-width=".6"/></g></svg>
<div class="a" style="left:1277px;top:349px;width:57px;height:23px;background:linear-gradient(#e4e4e4,#f6f6f6)"></div>
<svg class="a" style="left:1297.5px;top:353px" width="16" height="16" viewBox="0 0 16 16"><path d="M8 2 V14 M2 8 H14" stroke="#e00" stroke-width="3"/></svg>
<div class="a" style="left:1336px;top:349px;width:58px;height:23px;background:linear-gradient(#e4e4e4,#f6f6f6)"></div>
<svg class="a" style="left:1357.0px;top:353px" width="16" height="16" viewBox="0 0 16 16"><path d="M2 8 H14" stroke="#e00" stroke-width="3"/></svg>
<div class="a" style="left:1396px;top:349px;width:58px;height:23px;background:linear-gradient(#e4e4e4,#f6f6f6)"></div>
<svg class="a" style="left:1417.0px;top:353px" width="16" height="16" viewBox="0 0 16 16"><path d="M1 14 L2 10.5 L11.5 1 L14 3.5 L4.5 13 Z" fill="#e0b060" stroke="#9a7a30" stroke-width=".7"/>
<path d="M11.5 1 L12.5 0.2 L14.8 2.5 L14 3.5 Z" fill="#e04848"/>
<path d="M1 14 L2 10.5 L4.5 13 Z" fill="#f4e0c0"/><path d="M1 14 l.7-2 l1.3 1.3z" fill="#333"/></svg>
<div class="a" style="left:1155px;top:374px;width:300px;height:425px;background:#fff;border-left:1px solid #b4b4b4;border-bottom:1px solid #c8c8c8"></div>
<div class="a" style="left:1161px;top:381px;width:16px;height:9px;background:#000;border:1px solid #000"></div>
<div class="a" style="left:1183px;top:378.1px;font-size:13.3px;color:#000;white-space:nowrap;-webkit-text-stroke:.25px #000">0</div>
<svg class="a" style="left:1415px;top:379px" width="16" height="12" viewBox="0 0 16 12"><g transform="scale(1.0)"><path d="M0.3 5.6 C2 1.2 5 0 7.8 0 C10.5 0 13.8 1.2 15.6 5.6 C13.8 10.2 10.5 11.3 7.8 11.3 C5 11.3 2 10.2 0.3 5.6 Z" fill="#000"/>
<path d="M3.4 6.2 C4.6 3.9 6.2 3.3 7.8 3.3 C9.4 3.3 11 3.9 12.2 6.2 C11 8.3 9.4 8.7 7.8 8.7 C6.2 8.7 4.6 8.3 3.4 6.2 Z" fill="#fff"/>
<circle cx="7.8" cy="5.9" r="2.4" fill="#000"/><path d="M6.9 4.6 l.9 1.2" stroke="#999" stroke-width=".6"/></g></svg>
<svg class="a" style="left:1440px;top:378px" width="11" height="14" viewBox="0 0 11 14"><path d="M2.5 6 V4 C2.5 0.8 8.5 0.8 8.5 4 V6" fill="none" stroke="#b8b8b8" stroke-width="1.4"/><rect x="0.5" y="6" width="10" height="7.5" fill="#b8b8b8"/></svg>
<div class="a" style="left:1161px;top:401px;width:16px;height:9px;background:#000;border:1px solid #000"></div>
<div class="a" style="left:1183px;top:398.1px;font-size:13.3px;color:#000;white-space:nowrap;-webkit-text-stroke:.25px #000">Bordure</div>
<svg class="a" style="left:1415px;top:399px" width="16" height="12" viewBox="0 0 16 12"><g transform="scale(1.0)"><path d="M0.3 5.6 C2 1.2 5 0 7.8 0 C10.5 0 13.8 1.2 15.6 5.6 C13.8 10.2 10.5 11.3 7.8 11.3 C5 11.3 2 10.2 0.3 5.6 Z" fill="#000"/>
<path d="M3.4 6.2 C4.6 3.9 6.2 3.3 7.8 3.3 C9.4 3.3 11 3.9 12.2 6.2 C11 8.3 9.4 8.7 7.8 8.7 C6.2 8.7 4.6 8.3 3.4 6.2 Z" fill="#fff"/>
<circle cx="7.8" cy="5.9" r="2.4" fill="#000"/><path d="M6.9 4.6 l.9 1.2" stroke="#999" stroke-width=".6"/></g></svg>
<svg class="a" style="left:1440px;top:398px" width="11" height="14" viewBox="0 0 11 14"><path d="M2.5 6 V4 C2.5 0.8 8.5 0.8 8.5 4 V6" fill="none" stroke="#b8b8b8" stroke-width="1.4"/><rect x="0.5" y="6" width="10" height="7.5" fill="#b8b8b8"/></svg>
<div class="a" style="left:1161px;top:421px;width:16px;height:9px;background:#f00;border:1px solid #000"></div>
<div class="a" style="left:1183px;top:418.1px;font-size:13.3px;color:#000;white-space:nowrap;-webkit-text-stroke:.25px #000">Centre</div>
<svg class="a" style="left:1415px;top:419px" width="16" height="12" viewBox="0 0 16 12"><g transform="scale(1.0)"><path d="M0.3 5.6 C2 1.2 5 0 7.8 0 C10.5 0 13.8 1.2 15.6 5.6 C13.8 10.2 10.5 11.3 7.8 11.3 C5 11.3 2 10.2 0.3 5.6 Z" fill="#000"/>
<path d="M3.4 6.2 C4.6 3.9 6.2 3.3 7.8 3.3 C9.4 3.3 11 3.9 12.2 6.2 C11 8.3 9.4 8.7 7.8 8.7 C6.2 8.7 4.6 8.3 3.4 6.2 Z" fill="#fff"/>
<circle cx="7.8" cy="5.9" r="2.4" fill="#000"/><path d="M6.9 4.6 l.9 1.2" stroke="#999" stroke-width=".6"/></g></svg>
<svg class="a" style="left:1440px;top:418px" width="11" height="14" viewBox="0 0 11 14"><path d="M2.5 6 V4 C2.5 0.8 8.5 0.8 8.5 4 V6" fill="none" stroke="#b8b8b8" stroke-width="1.4"/><rect x="0.5" y="6" width="10" height="7.5" fill="#b8b8b8"/></svg>
<div class="a" style="left:1161px;top:441px;width:16px;height:9px;background:#087878;border:1px solid #000"></div>
<div class="a" style="left:1183px;top:438.1px;font-size:13.3px;color:#000;white-space:nowrap;-webkit-text-stroke:.25px #000">Cotations</div>
<svg class="a" style="left:1415px;top:439px" width="16" height="12" viewBox="0 0 16 12"><g transform="scale(1.0)"><path d="M0.3 5.6 C2 1.2 5 0 7.8 0 C10.5 0 13.8 1.2 15.6 5.6 C13.8 10.2 10.5 11.3 7.8 11.3 C5 11.3 2 10.2 0.3 5.6 Z" fill="#000"/>
<path d="M3.4 6.2 C4.6 3.9 6.2 3.3 7.8 3.3 C9.4 3.3 11 3.9 12.2 6.2 C11 8.3 9.4 8.7 7.8 8.7 C6.2 8.7 4.6 8.3 3.4 6.2 Z" fill="#fff"/>
<circle cx="7.8" cy="5.9" r="2.4" fill="#000"/><path d="M6.9 4.6 l.9 1.2" stroke="#999" stroke-width=".6"/></g></svg>
<svg class="a" style="left:1440px;top:438px" width="11" height="14" viewBox="0 0 11 14"><path d="M2.5 6 V4 C2.5 0.8 8.5 0.8 8.5 4 V6" fill="none" stroke="#b8b8b8" stroke-width="1.4"/><rect x="0.5" y="6" width="10" height="7.5" fill="#b8b8b8"/></svg>
<div class="a" style="left:1161px;top:461px;width:16px;height:9px;background:#fff;border:1px solid #000"></div>
<div class="a" style="left:1183px;top:458.1px;font-size:13.3px;color:#000;white-space:nowrap;-webkit-text-stroke:.25px #000">Defpoints</div>
<svg class="a" style="left:1415px;top:459px" width="16" height="12" viewBox="0 0 16 12"><g transform="scale(1.0)"><path d="M0.3 5.6 C2 1.2 5 0 7.8 0 C10.5 0 13.8 1.2 15.6 5.6 C13.8 10.2 10.5 11.3 7.8 11.3 C5 11.3 2 10.2 0.3 5.6 Z" fill="#000"/>
<path d="M3.4 6.2 C4.6 3.9 6.2 3.3 7.8 3.3 C9.4 3.3 11 3.9 12.2 6.2 C11 8.3 9.4 8.7 7.8 8.7 C6.2 8.7 4.6 8.3 3.4 6.2 Z" fill="#fff"/>
<circle cx="7.8" cy="5.9" r="2.4" fill="#000"/><path d="M6.9 4.6 l.9 1.2" stroke="#999" stroke-width=".6"/></g></svg>
<svg class="a" style="left:1440px;top:458px" width="11" height="14" viewBox="0 0 11 14"><path d="M2.5 6 V4 C2.5 0.8 8.5 0.8 8.5 4 V6" fill="none" stroke="#b8b8b8" stroke-width="1.4"/><rect x="0.5" y="6" width="10" height="7.5" fill="#b8b8b8"/></svg>
<div class="a" style="left:1161px;top:481px;width:16px;height:9px;background:#000;border:1px solid #000"></div>
<div class="a" style="left:1183px;top:478.1px;font-size:13.3px;color:#000;white-space:nowrap;-webkit-text-stroke:.25px #000">Visible</div>
<svg class="a" style="left:1415px;top:479px" width="16" height="12" viewBox="0 0 16 12"><g transform="scale(1.0)"><path d="M0.3 5.6 C2 1.2 5 0 7.8 0 C10.5 0 13.8 1.2 15.6 5.6 C13.8 10.2 10.5 11.3 7.8 11.3 C5 11.3 2 10.2 0.3 5.6 Z" fill="#000"/>
<path d="M3.4 6.2 C4.6 3.9 6.2 3.3 7.8 3.3 C9.4 3.3 11 3.9 12.2 6.2 C11 8.3 9.4 8.7 7.8 8.7 C6.2 8.7 4.6 8.3 3.4 6.2 Z" fill="#fff"/>
<circle cx="7.8" cy="5.9" r="2.4" fill="#000"/><path d="M6.9 4.6 l.9 1.2" stroke="#999" stroke-width=".6"/></g></svg>
<svg class="a" style="left:1440px;top:478px" width="11" height="14" viewBox="0 0 11 14"><path d="M2.5 6 V4 C2.5 0.8 8.5 0.8 8.5 4 V6" fill="none" stroke="#b8b8b8" stroke-width="1.4"/><rect x="0.5" y="6" width="10" height="7.5" fill="#b8b8b8"/></svg>
<svg class="a" style="left:1393px;top:477px" width="16" height="16" viewBox="0 0 16 16"><path d="M1 14 L2 10.5 L11.5 1 L14 3.5 L4.5 13 Z" fill="#e0b060" stroke="#9a7a30" stroke-width=".7"/>
<path d="M11.5 1 L12.5 0.2 L14.8 2.5 L14 3.5 Z" fill="#e04848"/>
<path d="M1 14 L2 10.5 L4.5 13 Z" fill="#f4e0c0"/><path d="M1 14 l.7-2 l1.3 1.3z" fill="#333"/></svg>
<div id="rtb" class="a"></div>
<div class="a" style="left:1462px;top:116px;width:28px;height:2px;background:repeating-linear-gradient(90deg,#a8a8a8 0 2px,transparent 2px 6px)"></div>
<div class="hl" style="left:1456px;top:120px;width:43px;height:42px"></div>
<svg class="a" style="left:1463px;top:127px" width="29" height="28" viewBox="0 0 29 28"><rect x="0.5" y="0.5" width="28" height="27" fill="#fff" stroke="#333"/><rect x="0.5" y="0.5" width="28" height="5" fill="#000"/><rect x="2" y="1.5" width="3" height="3" fill="#fff"/><path d="M9 10 l5-2 v13 l-5 2z" fill="#999" stroke="#444" stroke-width=".6"/><path d="M12 9 l8-3 v13 l-8 3z" fill="#eee" stroke="#444" stroke-width=".7"/><path d="M14 19 l4-7 M15 19 h4" stroke="#e44" stroke-width=".7"/></svg>
<div class="hl" style="left:1456px;top:167px;width:43px;height:42px"></div>
<svg class="a" style="left:1463px;top:174px" width="29" height="28" viewBox="0 0 29 28"><rect x="0.5" y="0.5" width="28" height="27" fill="#fff" stroke="#333"/><rect x="0.5" y="0.5" width="28" height="5" fill="#000"/><rect x="2" y="1.5" width="3" height="3" fill="#fff"/><rect x="7" y="10" width="11" height="8" fill="#f4ecc8" stroke="#555" stroke-width=".7"/><circle cx="17" cy="18" r="4.5" fill="#f4ecc8" stroke="#555" stroke-width=".7"/></svg>
<svg class="a" style="left:1463px;top:221px" width="29" height="28" viewBox="0 0 29 28"><rect x="0.5" y="0.5" width="28" height="27" fill="#fff" stroke="#333"/><rect x="0.5" y="0.5" width="28" height="5" fill="#000"/><rect x="2" y="1.5" width="3" height="3" fill="#fff"/><rect x="6" y="10" width="17" height="12" rx="2" fill="#f6f4f0" stroke="#c8d4e8" stroke-width=".9"/></svg>
<div class="a" style="left:1457px;top:262px;width:41px;height:1px;background:repeating-linear-gradient(90deg,#888 0 1px,transparent 1px 3px)"></div>
<svg class="a" style="left:1463px;top:277px" width="29" height="28" viewBox="0 0 29 28"><rect x="0.5" y="0.5" width="28" height="27" fill="#fff" stroke="#333"/><rect x="0.5" y="0.5" width="28" height="5" fill="#000"/><rect x="2" y="1.5" width="3" height="3" fill="#fff"/><rect x="4" y="9" width="4" height="3" fill="#000"/><rect x="4" y="15" width="4" height="3" fill="#000"/><rect x="4" y="21" width="4" height="3" fill="#000"/><rect x="10.5" y="9.5" width="14" height="2.5" fill="none" stroke="#444" stroke-width=".7"/><rect x="10.5" y="15.5" width="14" height="2.5" fill="none" stroke="#444" stroke-width=".7"/><rect x="10.5" y="21.5" width="14" height="2.5" fill="none" stroke="#444" stroke-width=".7"/></svg>
<svg class="a" style="left:1463px;top:323px" width="29" height="28" viewBox="0 0 29 28"><rect x="0.5" y="0.5" width="28" height="27" fill="#fff" stroke="#333"/><rect x="0.5" y="0.5" width="28" height="5" fill="#000"/><rect x="2" y="1.5" width="3" height="3" fill="#fff"/><path d="M6 9 h16 l-6 7 v8 l-3 2 v-10z" fill="#aaa" stroke="#555" stroke-width=".8"/></svg>
<svg class="a" style="left:1463px;top:369px" width="29" height="28" viewBox="0 0 29 28"><rect x="0.5" y="0.5" width="28" height="27" fill="#fff" stroke="#333"/><rect x="0.5" y="0.5" width="28" height="5" fill="#000"/><rect x="2" y="1.5" width="3" height="3" fill="#fff"/><path d="M7 10 v14 l7-4 v-6z" fill="#fff" stroke="#333" stroke-width=".8"/><rect x="14" y="13" width="8" height="8" fill="#888"/><path d="M4 17 h21" stroke="#e88" stroke-width=".8" stroke-dasharray="1.5 1"/></svg>
<div class="a" style="left:1457px;top:410px;width:41px;height:1px;background:repeating-linear-gradient(90deg,#888 0 1px,transparent 1px 3px)"></div>
<div class="hl" style="left:1456px;top:418px;width:43px;height:42px"></div>
<svg class="a" style="left:1463px;top:425px" width="29" height="28" viewBox="0 0 29 28"><rect x="0.5" y="0.5" width="28" height="27" fill="#fff" stroke="#333"/><rect x="0.5" y="0.5" width="28" height="5" fill="#000"/><rect x="2" y="1.5" width="3" height="3" fill="#fff"/><path d="M4 9 h10 M4 12 h10 M4 15 h12 M4 18 h12" stroke="#999" stroke-width=".7"/><path d="M0.5 22.5 h28" stroke="#333" stroke-width=".8"/><text x="15" y="27" font-size="4" text-anchor="middle" font-family="Liberation Sans">c    command</text></svg>
<svg class="a" style="left:1463px;top:472px" width="29" height="28" viewBox="0 0 29 28"><rect x="0.5" y="0.5" width="28" height="27" fill="#fff" stroke="#333"/><rect x="0.5" y="0.5" width="28" height="5" fill="#000"/><rect x="2" y="1.5" width="3" height="3" fill="#fff"/><rect x="8" y="9" width="13" height="15" fill="#c8862a" stroke="#8a5a18" stroke-width=".6"/><rect x="10" y="11" width="9" height="11.5" fill="#f4f4f4"/><rect x="11.5" y="7.5" width="6" height="3" fill="#999"/></svg>
<div id="status" class="a"></div>
<div class="a" style="left:2px;top:806.6px;font-size:9.8px;color:#000;white-space:nowrap;letter-spacing:.35px;-webkit-text-stroke:.08px #000">1738.439,449.3909</div>
<div class="a" style="left:2px;top:826.6px;font-size:9.8px;color:#000;white-space:nowrap;letter-spacing:.35px;-webkit-text-stroke:.08px #000">@1738.439,449.3909</div>
<div class="a" style="left:253px;top:802px;width:1px;height:40px;background:#9a9a9a"></div>
<div class="a" style="left:256px;top:806.6px;font-size:9.8px;color:#000;white-space:nowrap;letter-spacing:.35px;-webkit-text-stroke:.08px #000">1795.5842&lt;14°</div>
<div class="a" style="left:256px;top:826.6px;font-size:9.8px;color:#000;white-space:nowrap;letter-spacing:.35px;-webkit-text-stroke:.08px #000">@1795.5842&lt;14°</div>
<div class="a" style="left:506px;top:819px;width:6px;height:6px;border-radius:3px;background:#c6c6c6"></div>
<div class="a" style="left:532px;top:816.8px;font-size:10px;color:#000;white-space:nowrap;letter-spacing:.1px;-webkit-text-stroke:.12px #000">Sélectionne une entité ou une région</div>
<svg class="a" style="left:716px;top:805px" width="20" height="32" viewBox="0 0 20 32"><path d="M9.5 1 C4 1 1.5 5 1.5 10 V22 C1.5 27.5 4.5 31 9.5 31 C14.5 31 17.5 27.5 17.5 22 V10 C17.5 5 15 1 9.5 1 Z" fill="#fff" stroke="#333" stroke-width=".9"/><path d="M1.5 13 C5 11.5 14 11.5 17.5 13" fill="none" stroke="#333" stroke-width=".9"/><rect x="8" y="3.5" width="3" height="7" rx="1.5" fill="none" stroke="#333" stroke-width=".8"/></svg>
<div class="a" style="left:940px;top:819px;width:6px;height:6px;border-radius:3px;background:#c6c6c6"></div>
<div class="a" style="left:949px;top:816.8px;font-size:10px;color:#000;white-space:nowrap;letter-spacing:.1px;-webkit-text-stroke:.12px #000">Aucune des entités sélectionnées.</div>
<div class="a" style="left:1269px;top:819px;width:6px;height:6px;border-radius:3px;background:#c6c6c6"></div>
<svg class="a" style="left:450px;top:52px" width="90" height="90" viewBox="450 52 90 90">
<defs><radialGradient id="ring" cx="494.8" cy="96.3" r="40" gradientUnits="userSpaceOnUse">
<stop offset="0" stop-color="#c8d8e8" stop-opacity="0.10"/>
<stop offset="0.80" stop-color="#b8cce0" stop-opacity="0.12"/>
<stop offset="0.85" stop-color="#90acc8" stop-opacity="0.35"/>
<stop offset="0.875" stop-color="#90acc8" stop-opacity="0.22"/>
<stop offset="0.905" stop-color="#88a6c4" stop-opacity="0.50"/>
<stop offset="0.935" stop-color="#90acc8" stop-opacity="0.30"/>
<stop offset="0.965" stop-color="#88a6c4" stop-opacity="0.45"/>
<stop offset="0.99" stop-color="#90acc8" stop-opacity="0.10"/>
<stop offset="1" stop-color="#90acc8" stop-opacity="0"/></radialGradient></defs>
<circle cx="494.8" cy="96.3" r="40" fill="url(#ring)"/>
<path d="M495.5 97.5 L495.5 118.5 L500.6 113.5 L505.5 123.5 L508.9 122.2 L504.5 112.5 L510 112 Z" fill="#fff" stroke="#fff" stroke-width="3" stroke-linejoin="round"/>
<path d="M495.5 97.5 L495.5 118.5 L500.6 113.5 L505.5 123.5 L508.9 122.2 L504.5 112.5 L510 112 Z" fill="#fff" stroke="#000" stroke-width="1.1" stroke-linejoin="miter"/>
</svg>
</body></html>
